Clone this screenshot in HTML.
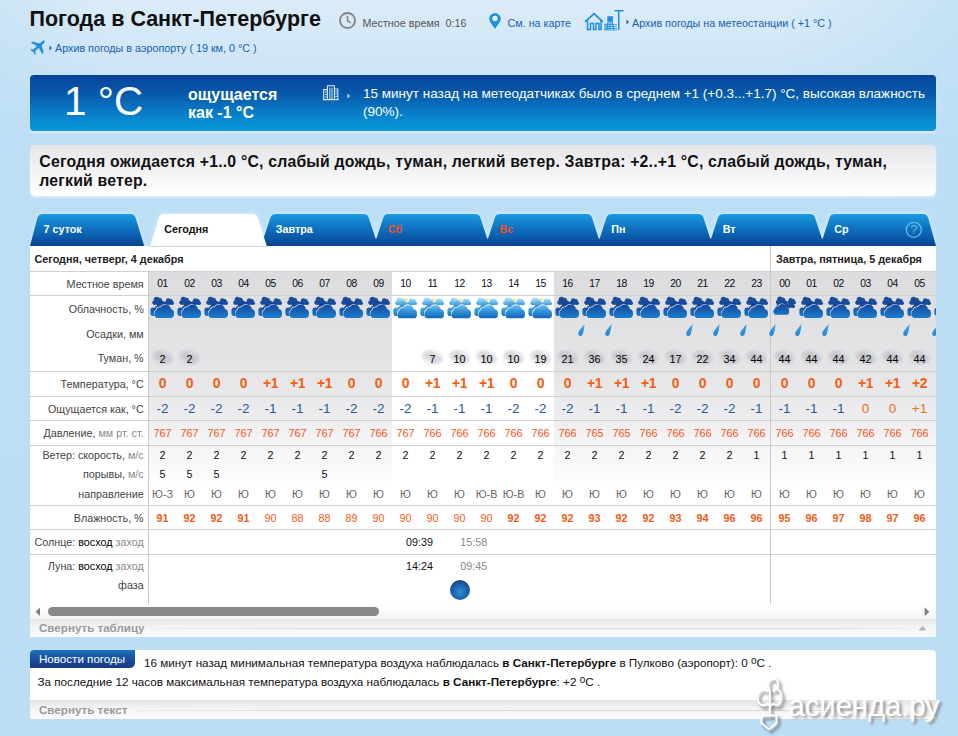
<!DOCTYPE html>
<html lang="ru"><head><meta charset="utf-8"><title>Погода в Санкт-Петербурге</title>
<style>
html,body{margin:0;padding:0}
body{width:958px;height:736px;overflow:hidden;position:relative;font-family:"Liberation Sans",Arial,sans-serif;background:#bcdef5}
#bg{position:absolute;left:0;top:0;width:958px;height:736px;background:linear-gradient(to bottom,#dcecf8 0,#cfe6f7 60px,#bddff5 135px,#bcdef5 100%)}
.t{position:absolute;white-space:nowrap;line-height:1}
.abs{position:absolute}
a{color:#1860b0;text-decoration:none}
.lnk{color:#1860b0;font-size:10.75px}
.lab{position:absolute;right:0;white-space:nowrap;font-size:10.75px;color:#444;line-height:1}
.c{position:absolute;width:27px;text-align:center;white-space:nowrap;line-height:1}
.hr{position:absolute;left:30px;width:906px;height:1px;background:#d0d0d0}
</style></head><body><div id="bg"></div><div class="abs" style="left:0;top:0;width:958px;height:736px;background:linear-gradient(to right,rgba(188,222,245,.5) 0,rgba(188,222,245,0) 110px,rgba(188,222,245,0) 780px,rgba(188,222,245,.7) 958px)"></div>

<div class="t" style="left:29.5px;top:9.2px;font-size:21.5px;font-weight:bold;color:#111">Погода в Санкт-Петербурге</div>
<svg class="abs" style="left:338px;top:11px" width="19" height="19" viewBox="0 0 19 19"><circle cx="9.5" cy="9.5" r="7.5" fill="none" stroke="#858585" stroke-width="1.9"/><path d="M9.5 4.8V9.8L12.6 11.6" fill="none" stroke="#858585" stroke-width="1.6"/></svg>
<div class="t" style="left:362.5px;top:17.6px;font-size:10.75px;color:#555;white-space:pre">Местное время  0:16</div>
<svg class="abs" style="left:488px;top:12px" width="14" height="18" viewBox="0 0 14 18"><path d="M7 1.2C3.7 1.2 1.3 3.6 1.3 6.7c0 3.6 3.6 6.3 5.7 10.2 2.1-3.9 5.7-6.6 5.7-10.2C12.7 3.6 10.3 1.2 7 1.2z" fill="#1b8fe0"/><circle cx="7" cy="6.5" r="2.7" fill="#e6f1fa"/></svg>
<div class="t lnk" style="left:507.5px;top:17.6px">См. на карте</div>
<svg class="abs" style="left:584px;top:8px" width="42" height="24" viewBox="0 0 42 24"><g fill="none" stroke="#1b8fe0" stroke-width="1.5"><path d="M1 13.8L10 5.6L19 13.8" stroke-width="1.8"/><path d="M3.5 12V21.6H6.5V15.5H9.5V21.6H12V15.5H15V21.6H17V12"/><path d="M34.7 2V22M30.5 2.7H39.5"/></g><rect x="23.3" y="8.3" width="5.6" height="5" fill="#1b8fe0"/><path d="M24.3 13L22.5 21.8M27.9 13L29.8 21.8M26.1 13V21.8" stroke="#1b8fe0" stroke-width="1.2" fill="none"/><path d="M20 16.5H33M20 18.5H33M20 20.5H33M20 22H33" stroke="#1b8fe0" stroke-width="0.9" opacity=".75"/><path d="M21 15.5V22M23 15.5V22M25 15.5V22" stroke="#1b8fe0" stroke-width="0.8" opacity=".7"/></svg>
<svg class="abs" style="left:626px;top:19px" width="4" height="6" viewBox="0 0 4 6"><path d="M0.5 0.5L3 3L0.5 5.5z" fill="#1860b0"/></svg>
<div class="t lnk" style="left:632px;top:17.6px">Архив погоды на метеостанции ( +1 °C )</div>
<svg class="abs" style="left:29.8px;top:40.2px" width="16" height="15.1" viewBox="0 0 18 17"><g fill="#1b8fe0"><path d="M16.3 0.9C17 1.6 16.4 3 15.3 4L4.4 13.8L2.4 11.8L13.2 1.9C14.2 0.9 15.6 0.3 16.3 0.9z"/><path d="M11.8 4.1L2.6 1.7L1.1 3.2L8.8 7.4z"/><path d="M13 5.4L15.3 14.4L13.8 15.9L9.7 8.4z"/><path d="M4.6 11.4L1.2 10.5L0.4 11.3L3.2 13.1zM5.5 12.4L6.5 15.8L5.7 16.6L3.8 13.7z"/></g></svg>
<svg class="abs" style="left:48.5px;top:45px" width="4" height="6" viewBox="0 0 4 6"><path d="M0.5 0.5L3 3L0.5 5.5z" fill="#1860b0"/></svg>
<div class="t lnk" style="left:55px;top:42.6px">Архив погоды в аэропорту ( 19 км, 0 °C )</div>
<div class="abs" style="left:30px;top:75px;width:906px;height:56px;border-radius:4px;box-shadow:0 2px 2px rgba(255,255,255,.45);background:linear-gradient(to bottom,#06449a 0,#0757a8 30%,#086fbc 55%,#0989d0 80%,#0b99dc 100%)"></div>
<div class="t" style="left:64px;top:80.5px;font-size:40.5px;color:#fff">1 °C</div>
<div class="t" style="left:188px;top:85.5px;font-size:16px;font-weight:bold;color:#fff;line-height:18.4px">ощущается<br>как -1 °C</div>
<svg class="abs" style="left:322px;top:84px" width="18" height="17" viewBox="0 0 18 17"><g fill="none" stroke="#e4eefa" stroke-width="1.05"><path d="M1.7 15.5V5.6H5.4M5.4 15.5V1.7H12.4V15.5M12.4 4.9H15.8V15.5M0.8 15.6H16.7"/><path d="M7.9 3.6V15M10 3.6V15" stroke-width=".9"/><path d="M2.8 8H5M2.8 10.5H5M2.8 13H5M13.2 7.5H15M13.2 10H15M13.2 12.5H15" stroke-width=".9" opacity=".85"/></g></svg>
<svg class="abs" style="left:347px;top:92.5px" width="4" height="6" viewBox="0 0 4 6"><path d="M0.5 0.5L3 3L0.5 5.5z" fill="#cfe3f5"/></svg>
<div class="t" style="left:363px;top:84.8px;font-size:13.5px;color:#fff;line-height:18.3px;white-space:normal;width:570px">15 минут назад на метеодатчиках было в среднем +1 (+0.3...+1.7) °C, высокая влажность (90%).</div>
<div class="abs" style="left:30px;top:145px;width:906px;height:51px;border-radius:5px;box-shadow:0 2px 2px rgba(255,255,255,.4);background:linear-gradient(to bottom,#e6e6e9 0,#f3f3f5 50%,#fff 100%)"></div>
<div class="t" style="left:39.3px;top:151.8px;font-size:15.8px;letter-spacing:0.2px;font-weight:bold;color:#111;line-height:19.3px;white-space:normal;width:880px">Сегодня ожидается +1..0 °C, слабый дождь, туман, легкий ветер. Завтра: +2..+1 °C, слабый дождь, туман, легкий ветер.</div>
<svg class="abs" style="left:30px;top:208px" width="906" height="38" viewBox="0 -6 906 38">
<defs><linearGradient id="tg" x1="0" y1="0" x2="0" y2="32" gradientUnits="userSpaceOnUse"><stop offset="0" stop-color="#1b9ce0"/><stop offset=".12" stop-color="#1590d8"/><stop offset=".5" stop-color="#0e6dbd"/><stop offset=".85" stop-color="#09509f"/><stop offset="1" stop-color="#074291"/></linearGradient>
<filter id="gl" x="-5%" y="-30%" width="110%" height="160%"><feGaussianBlur stdDeviation="2.2"/></filter></defs>
<g filter="url(#gl)" opacity=".55" fill="#fff"><path d="M0,32 L7.3,4 Q8.5,0 13,0 L100,0 Q104.5,0 105.7,4 L114.2,32 Z"/><path d="M231,32 L240.2,4 Q241.5,0 246,0 L333,0 Q337.5,0 338.6,3.2 L345.3,23.8 Q346,25.9 346.7,23.8 L353.4,3.2 Q354.5,0 359,0 L444.6,0 Q449.1,0 450.2,3.2 L456.9,23.8 Q457.6,25.9 458.3,23.8 L465,3.2 Q466.1,0 470.6,0 L556.2,0 Q560.7,0 561.8,3.2 L568.5,23.8 Q569.2,25.9 569.9,23.8 L576.6,3.2 Q577.7,0 582.2,0 L667.7,0 Q672.2,0 673.3,3.2 L680,23.8 Q680.7,25.9 681.4,23.8 L688.1,3.2 Q689.2,0 693.7,0 L779.3,0 Q783.8,0 784.9,3.2 L791.6,23.8 Q792.3,25.9 793,23.8 L799.7,3.2 Q800.8,0 805.3,0 L892.5,0 Q897,0 898.2,4 L906,32 Z"/><path d="M120.6,32 L128.8,4 Q130,0 134.5,0 L222,0 Q226.5,0 227.7,4 L236.8,32 Z"/></g>
<path d="M0,32 L7.3,4 Q8.5,0 13,0 L100,0 Q104.5,0 105.7,4 L114.2,32 Z" fill="url(#tg)"/><path d="M231,32 L240.2,4 Q241.5,0 246,0 L333,0 Q337.5,0 338.6,3.2 L345.3,23.8 Q346,25.9 346.7,23.8 L353.4,3.2 Q354.5,0 359,0 L444.6,0 Q449.1,0 450.2,3.2 L456.9,23.8 Q457.6,25.9 458.3,23.8 L465,3.2 Q466.1,0 470.6,0 L556.2,0 Q560.7,0 561.8,3.2 L568.5,23.8 Q569.2,25.9 569.9,23.8 L576.6,3.2 Q577.7,0 582.2,0 L667.7,0 Q672.2,0 673.3,3.2 L680,23.8 Q680.7,25.9 681.4,23.8 L688.1,3.2 Q689.2,0 693.7,0 L779.3,0 Q783.8,0 784.9,3.2 L791.6,23.8 Q792.3,25.9 793,23.8 L799.7,3.2 Q800.8,0 805.3,0 L892.5,0 Q897,0 898.2,4 L906,32 Z" fill="url(#tg)"/><path d="M120.6,32 L128.8,4 Q130,0 134.5,0 L222,0 Q226.5,0 227.7,4 L236.8,32 Z" fill="#fff"/>
<circle cx="883.8" cy="15.8" r="7.5" fill="none" stroke="#6ab8ea" stroke-width="1.3"/>
</svg><div class="t" style="left:910.2px;top:223.3px;font-size:13px;color:#6ab8ea">?</div><div class="t" style="left:43.6px;top:223.6px;font-size:10.75px;font-weight:bold;color:#fff">7 суток</div><div class="t" style="left:164.2px;top:223.6px;font-size:10.75px;font-weight:bold;color:#111">Сегодня</div><div class="t" style="left:275.8px;top:223.6px;font-size:10.75px;font-weight:bold;color:#fff">Завтра</div><div class="t" style="left:388px;top:223.6px;font-size:10.75px;font-weight:bold;color:#f4511e">Сб</div><div class="t" style="left:499.6px;top:223.6px;font-size:10.75px;font-weight:bold;color:#f4511e">Вс</div><div class="t" style="left:611.2px;top:223.6px;font-size:10.75px;font-weight:bold;color:#fff">Пн</div><div class="t" style="left:722.7px;top:223.6px;font-size:10.75px;font-weight:bold;color:#fff">Вт</div><div class="t" style="left:834.3px;top:223.6px;font-size:10.75px;font-weight:bold;color:#fff">Ср</div>
<div class="abs" style="left:30px;top:246px;width:906px;height:358px;background:#fff;overflow:hidden" id="tbl">
<div class="abs" style="left:119px;top:25px;width:243px;height:260px;background:linear-gradient(to bottom,#dcdcde 0,#dfdfe2 24px,#e5e5e8 100px,#e9e9eb 125px,#eeeef0 150px,#f5f5f6 175px,#fafafa 198px,#fff 220px)"></div>
<div class="abs" style="left:524px;top:25px;width:382px;height:260px;background:linear-gradient(to bottom,#dcdcde 0,#dfdfe2 24px,#e5e5e8 100px,#e9e9eb 125px,#eeeef0 150px,#f5f5f6 175px,#fafafa 198px,#fff 220px)"></div>
</div>
<div class="hr" style="top:271px"></div>
<div class="hr" style="top:295px"></div>
<div class="hr" style="top:371px"></div>
<div class="hr" style="top:396px"></div>
<div class="hr" style="top:420px"></div>
<div class="hr" style="top:445px"></div>
<div class="hr" style="top:505px"></div>
<div class="hr" style="top:529px"></div>
<div class="hr" style="top:554px"></div>
<div class="abs" style="left:148px;top:271px;width:1px;height:333px;background:#c8c8c8"></div>
<div class="abs" style="left:770px;top:246px;width:1px;height:358px;background:#c8c8c8"></div>
<div class="t" style="left:34.5px;top:253.6px;font-size:10.8px;font-weight:bold;color:#222">Сегодня, четверг, 4 декабря</div>
<div class="t" style="left:776px;top:253.6px;font-size:10.8px;font-weight:bold;color:#222">Завтра, пятница, 5 декабря</div>
<div class="abs" style="left:30px;top:0;width:113.7px;height:0">
<div class="lab" style="top:279.3px">Местное время</div>
<div class="lab" style="top:304.1px">Облачность, %</div>
<div class="lab" style="top:329.1px">Осадки, мм</div>
<div class="lab" style="top:353.4px">Туман, %</div>
<div class="lab" style="top:378.6px">Температура, °C</div>
<div class="lab" style="top:404.1px">Ощущается как, °C</div>
<div class="lab" style="top:428.1px">Давление, <span style="color:#888">мм рт. ст.</span></div>
<div class="lab" style="top:450.1px">Ветер: скорость, <span style="color:#888">м/с</span></div>
<div class="lab" style="top:468.8px">порывы, <span style="color:#888">м/с</span></div>
<div class="lab" style="top:488.8px">направление</div>
<div class="lab" style="top:512.9px">Влажность, %</div>
<div class="lab" style="top:536.9px">Солнце: <span style="color:#000">восход</span> <span style="color:#888">заход</span></div>
<div class="lab" style="top:560.9px">Луна: <span style="color:#000">восход</span> <span style="color:#888">заход</span></div>
<div class="lab" style="top:579.7px">фаза</div>
</div>
<div class="abs" style="left:150px;top:245.5px;width:117px;height:1px;background:#d4d4d4"></div>
<svg width="0" height="0" style="position:absolute"><defs>
<linearGradient id="cn" x1="0" y1="0" x2="0" y2="23" gradientUnits="userSpaceOnUse"><stop offset="0" stop-color="#123f8f"/><stop offset=".45" stop-color="#164fa2"/><stop offset="1" stop-color="#1c82d2"/></linearGradient>
<linearGradient id="cn2" x1="0" y1="0" x2="0" y2="23" gradientUnits="userSpaceOnUse"><stop offset="0" stop-color="#1a50a0"/><stop offset="1" stop-color="#123f8c"/></linearGradient>
<linearGradient id="cd" x1="0" y1="1" x2="0" y2="10" gradientUnits="userSpaceOnUse"><stop offset="0" stop-color="#c2e7f9"/><stop offset=".45" stop-color="#7fc8f1"/><stop offset="1" stop-color="#2a90d8"/></linearGradient>
<linearGradient id="cd2" x1="0" y1="9" x2="0" y2="22" gradientUnits="userSpaceOnUse"><stop offset="0" stop-color="#74c2ef"/><stop offset=".4" stop-color="#3a9adc"/><stop offset="1" stop-color="#1268ba"/></linearGradient>
<linearGradient id="cn3" x1="0" y1="0" x2="0" y2="23" gradientUnits="userSpaceOnUse"><stop offset="0" stop-color="#184c9c"/><stop offset="1" stop-color="#123e8a"/></linearGradient>
<linearGradient id="cd3" x1="0" y1="5" x2="0" y2="13" gradientUnits="userSpaceOnUse"><stop offset="0" stop-color="#70bcec"/><stop offset="1" stop-color="#1f7ccc"/></linearGradient>
<radialGradient id="fg"><stop offset="0" stop-color="#a0a0aa" stop-opacity=".3"/><stop offset=".6" stop-color="#a8a8b2" stop-opacity=".2"/><stop offset="1" stop-color="#b0b0b8" stop-opacity="0"/></radialGradient>
<linearGradient id="dr" x1="0" y1="0" x2="0" y2="1"><stop offset="0" stop-color="#4aa6e0"/><stop offset="1" stop-color="#1f86d0"/></linearGradient>
</defs></svg><svg class="abs" style="left:150.2px;top:296px" width="26" height="23" viewBox="0 0 26 23"><rect x="2.40" y="4.90" width="10.85" height="3.78" rx="1.89" fill="url(#cn2)"/><circle cx="4.56" cy="6.42" r="2.16" fill="url(#cn2)"/><circle cx="6.50" cy="3.61" r="2.81" fill="url(#cn2)"/><circle cx="9.53" cy="4.15" r="2.48" fill="url(#cn2)"/><circle cx="11.26" cy="6.52" r="2.00" fill="url(#cn2)"/><rect x="14.80" y="5.62" width="9.05" height="3.15" rx="1.57" fill="url(#cn2)"/><circle cx="16.60" cy="6.88" r="1.80" fill="url(#cn2)"/><circle cx="18.22" cy="4.54" r="2.34" fill="url(#cn2)"/><circle cx="20.74" cy="4.99" r="2.07" fill="url(#cn2)"/><circle cx="22.18" cy="6.97" r="1.67" fill="url(#cn2)"/><rect x="5.00" y="10.53" width="15.68" height="5.46" rx="2.73" fill="url(#cn3)"/><circle cx="8.12" cy="12.71" r="3.12" fill="url(#cn3)"/><circle cx="10.93" cy="8.66" r="4.06" fill="url(#cn3)"/><circle cx="15.30" cy="9.44" r="3.59" fill="url(#cn3)"/><circle cx="17.79" cy="12.87" r="2.89" fill="url(#cn3)"/><circle cx="3.3" cy="14.4" r="2.9" fill="url(#cn)"/><circle cx="3.2" cy="17.2" r="2.8" fill="url(#cn)"/><circle cx="5.5" cy="17.5" r="2.5" fill="url(#cn)"/><rect x="3.95" y="14.48" width="19.40" height="6.80" rx="3.40" fill="#d2e2f4"/><circle cx="7.85" cy="17.08" r="3.90" fill="#d2e2f4"/><circle cx="9.55" cy="14.28" r="3.70" fill="#d2e2f4"/><circle cx="14.85" cy="13.18" r="5.30" fill="#d2e2f4"/><circle cx="19.55" cy="16.08" r="3.80" fill="#d2e2f4"/><rect x="4.50" y="15.10" width="19.40" height="6.80" rx="3.40" fill="url(#cn)"/><circle cx="8.40" cy="17.70" r="3.90" fill="url(#cn)"/><circle cx="10.10" cy="14.90" r="3.70" fill="url(#cn)"/><circle cx="15.40" cy="13.80" r="5.30" fill="url(#cn)"/><circle cx="20.10" cy="16.70" r="3.80" fill="url(#cn)"/></svg><svg class="abs" style="left:177.2px;top:296px" width="26" height="23" viewBox="0 0 26 23"><rect x="2.40" y="4.90" width="10.85" height="3.78" rx="1.89" fill="url(#cn2)"/><circle cx="4.56" cy="6.42" r="2.16" fill="url(#cn2)"/><circle cx="6.50" cy="3.61" r="2.81" fill="url(#cn2)"/><circle cx="9.53" cy="4.15" r="2.48" fill="url(#cn2)"/><circle cx="11.26" cy="6.52" r="2.00" fill="url(#cn2)"/><rect x="14.80" y="5.62" width="9.05" height="3.15" rx="1.57" fill="url(#cn2)"/><circle cx="16.60" cy="6.88" r="1.80" fill="url(#cn2)"/><circle cx="18.22" cy="4.54" r="2.34" fill="url(#cn2)"/><circle cx="20.74" cy="4.99" r="2.07" fill="url(#cn2)"/><circle cx="22.18" cy="6.97" r="1.67" fill="url(#cn2)"/><rect x="5.00" y="10.53" width="15.68" height="5.46" rx="2.73" fill="url(#cn3)"/><circle cx="8.12" cy="12.71" r="3.12" fill="url(#cn3)"/><circle cx="10.93" cy="8.66" r="4.06" fill="url(#cn3)"/><circle cx="15.30" cy="9.44" r="3.59" fill="url(#cn3)"/><circle cx="17.79" cy="12.87" r="2.89" fill="url(#cn3)"/><circle cx="3.3" cy="14.4" r="2.9" fill="url(#cn)"/><circle cx="3.2" cy="17.2" r="2.8" fill="url(#cn)"/><circle cx="5.5" cy="17.5" r="2.5" fill="url(#cn)"/><rect x="3.95" y="14.48" width="19.40" height="6.80" rx="3.40" fill="#d2e2f4"/><circle cx="7.85" cy="17.08" r="3.90" fill="#d2e2f4"/><circle cx="9.55" cy="14.28" r="3.70" fill="#d2e2f4"/><circle cx="14.85" cy="13.18" r="5.30" fill="#d2e2f4"/><circle cx="19.55" cy="16.08" r="3.80" fill="#d2e2f4"/><rect x="4.50" y="15.10" width="19.40" height="6.80" rx="3.40" fill="url(#cn)"/><circle cx="8.40" cy="17.70" r="3.90" fill="url(#cn)"/><circle cx="10.10" cy="14.90" r="3.70" fill="url(#cn)"/><circle cx="15.40" cy="13.80" r="5.30" fill="url(#cn)"/><circle cx="20.10" cy="16.70" r="3.80" fill="url(#cn)"/></svg><svg class="abs" style="left:204.2px;top:296px" width="26" height="23" viewBox="0 0 26 23"><rect x="2.40" y="4.90" width="10.85" height="3.78" rx="1.89" fill="url(#cn2)"/><circle cx="4.56" cy="6.42" r="2.16" fill="url(#cn2)"/><circle cx="6.50" cy="3.61" r="2.81" fill="url(#cn2)"/><circle cx="9.53" cy="4.15" r="2.48" fill="url(#cn2)"/><circle cx="11.26" cy="6.52" r="2.00" fill="url(#cn2)"/><rect x="14.80" y="5.62" width="9.05" height="3.15" rx="1.57" fill="url(#cn2)"/><circle cx="16.60" cy="6.88" r="1.80" fill="url(#cn2)"/><circle cx="18.22" cy="4.54" r="2.34" fill="url(#cn2)"/><circle cx="20.74" cy="4.99" r="2.07" fill="url(#cn2)"/><circle cx="22.18" cy="6.97" r="1.67" fill="url(#cn2)"/><rect x="5.00" y="10.53" width="15.68" height="5.46" rx="2.73" fill="url(#cn3)"/><circle cx="8.12" cy="12.71" r="3.12" fill="url(#cn3)"/><circle cx="10.93" cy="8.66" r="4.06" fill="url(#cn3)"/><circle cx="15.30" cy="9.44" r="3.59" fill="url(#cn3)"/><circle cx="17.79" cy="12.87" r="2.89" fill="url(#cn3)"/><circle cx="3.3" cy="14.4" r="2.9" fill="url(#cn)"/><circle cx="3.2" cy="17.2" r="2.8" fill="url(#cn)"/><circle cx="5.5" cy="17.5" r="2.5" fill="url(#cn)"/><rect x="3.95" y="14.48" width="19.40" height="6.80" rx="3.40" fill="#d2e2f4"/><circle cx="7.85" cy="17.08" r="3.90" fill="#d2e2f4"/><circle cx="9.55" cy="14.28" r="3.70" fill="#d2e2f4"/><circle cx="14.85" cy="13.18" r="5.30" fill="#d2e2f4"/><circle cx="19.55" cy="16.08" r="3.80" fill="#d2e2f4"/><rect x="4.50" y="15.10" width="19.40" height="6.80" rx="3.40" fill="url(#cn)"/><circle cx="8.40" cy="17.70" r="3.90" fill="url(#cn)"/><circle cx="10.10" cy="14.90" r="3.70" fill="url(#cn)"/><circle cx="15.40" cy="13.80" r="5.30" fill="url(#cn)"/><circle cx="20.10" cy="16.70" r="3.80" fill="url(#cn)"/></svg><svg class="abs" style="left:231.2px;top:296px" width="26" height="23" viewBox="0 0 26 23"><rect x="2.40" y="4.90" width="10.85" height="3.78" rx="1.89" fill="url(#cn2)"/><circle cx="4.56" cy="6.42" r="2.16" fill="url(#cn2)"/><circle cx="6.50" cy="3.61" r="2.81" fill="url(#cn2)"/><circle cx="9.53" cy="4.15" r="2.48" fill="url(#cn2)"/><circle cx="11.26" cy="6.52" r="2.00" fill="url(#cn2)"/><rect x="14.80" y="5.62" width="9.05" height="3.15" rx="1.57" fill="url(#cn2)"/><circle cx="16.60" cy="6.88" r="1.80" fill="url(#cn2)"/><circle cx="18.22" cy="4.54" r="2.34" fill="url(#cn2)"/><circle cx="20.74" cy="4.99" r="2.07" fill="url(#cn2)"/><circle cx="22.18" cy="6.97" r="1.67" fill="url(#cn2)"/><rect x="5.00" y="10.53" width="15.68" height="5.46" rx="2.73" fill="url(#cn3)"/><circle cx="8.12" cy="12.71" r="3.12" fill="url(#cn3)"/><circle cx="10.93" cy="8.66" r="4.06" fill="url(#cn3)"/><circle cx="15.30" cy="9.44" r="3.59" fill="url(#cn3)"/><circle cx="17.79" cy="12.87" r="2.89" fill="url(#cn3)"/><circle cx="3.3" cy="14.4" r="2.9" fill="url(#cn)"/><circle cx="3.2" cy="17.2" r="2.8" fill="url(#cn)"/><circle cx="5.5" cy="17.5" r="2.5" fill="url(#cn)"/><rect x="3.95" y="14.48" width="19.40" height="6.80" rx="3.40" fill="#d2e2f4"/><circle cx="7.85" cy="17.08" r="3.90" fill="#d2e2f4"/><circle cx="9.55" cy="14.28" r="3.70" fill="#d2e2f4"/><circle cx="14.85" cy="13.18" r="5.30" fill="#d2e2f4"/><circle cx="19.55" cy="16.08" r="3.80" fill="#d2e2f4"/><rect x="4.50" y="15.10" width="19.40" height="6.80" rx="3.40" fill="url(#cn)"/><circle cx="8.40" cy="17.70" r="3.90" fill="url(#cn)"/><circle cx="10.10" cy="14.90" r="3.70" fill="url(#cn)"/><circle cx="15.40" cy="13.80" r="5.30" fill="url(#cn)"/><circle cx="20.10" cy="16.70" r="3.80" fill="url(#cn)"/></svg><svg class="abs" style="left:258.2px;top:296px" width="26" height="23" viewBox="0 0 26 23"><rect x="2.40" y="4.90" width="10.85" height="3.78" rx="1.89" fill="url(#cn2)"/><circle cx="4.56" cy="6.42" r="2.16" fill="url(#cn2)"/><circle cx="6.50" cy="3.61" r="2.81" fill="url(#cn2)"/><circle cx="9.53" cy="4.15" r="2.48" fill="url(#cn2)"/><circle cx="11.26" cy="6.52" r="2.00" fill="url(#cn2)"/><rect x="14.80" y="5.62" width="9.05" height="3.15" rx="1.57" fill="url(#cn2)"/><circle cx="16.60" cy="6.88" r="1.80" fill="url(#cn2)"/><circle cx="18.22" cy="4.54" r="2.34" fill="url(#cn2)"/><circle cx="20.74" cy="4.99" r="2.07" fill="url(#cn2)"/><circle cx="22.18" cy="6.97" r="1.67" fill="url(#cn2)"/><rect x="5.00" y="10.53" width="15.68" height="5.46" rx="2.73" fill="url(#cn3)"/><circle cx="8.12" cy="12.71" r="3.12" fill="url(#cn3)"/><circle cx="10.93" cy="8.66" r="4.06" fill="url(#cn3)"/><circle cx="15.30" cy="9.44" r="3.59" fill="url(#cn3)"/><circle cx="17.79" cy="12.87" r="2.89" fill="url(#cn3)"/><circle cx="3.3" cy="14.4" r="2.9" fill="url(#cn)"/><circle cx="3.2" cy="17.2" r="2.8" fill="url(#cn)"/><circle cx="5.5" cy="17.5" r="2.5" fill="url(#cn)"/><rect x="3.95" y="14.48" width="19.40" height="6.80" rx="3.40" fill="#d2e2f4"/><circle cx="7.85" cy="17.08" r="3.90" fill="#d2e2f4"/><circle cx="9.55" cy="14.28" r="3.70" fill="#d2e2f4"/><circle cx="14.85" cy="13.18" r="5.30" fill="#d2e2f4"/><circle cx="19.55" cy="16.08" r="3.80" fill="#d2e2f4"/><rect x="4.50" y="15.10" width="19.40" height="6.80" rx="3.40" fill="url(#cn)"/><circle cx="8.40" cy="17.70" r="3.90" fill="url(#cn)"/><circle cx="10.10" cy="14.90" r="3.70" fill="url(#cn)"/><circle cx="15.40" cy="13.80" r="5.30" fill="url(#cn)"/><circle cx="20.10" cy="16.70" r="3.80" fill="url(#cn)"/></svg><svg class="abs" style="left:285.2px;top:296px" width="26" height="23" viewBox="0 0 26 23"><rect x="2.40" y="4.90" width="10.85" height="3.78" rx="1.89" fill="url(#cn2)"/><circle cx="4.56" cy="6.42" r="2.16" fill="url(#cn2)"/><circle cx="6.50" cy="3.61" r="2.81" fill="url(#cn2)"/><circle cx="9.53" cy="4.15" r="2.48" fill="url(#cn2)"/><circle cx="11.26" cy="6.52" r="2.00" fill="url(#cn2)"/><rect x="14.80" y="5.62" width="9.05" height="3.15" rx="1.57" fill="url(#cn2)"/><circle cx="16.60" cy="6.88" r="1.80" fill="url(#cn2)"/><circle cx="18.22" cy="4.54" r="2.34" fill="url(#cn2)"/><circle cx="20.74" cy="4.99" r="2.07" fill="url(#cn2)"/><circle cx="22.18" cy="6.97" r="1.67" fill="url(#cn2)"/><rect x="5.00" y="10.53" width="15.68" height="5.46" rx="2.73" fill="url(#cn3)"/><circle cx="8.12" cy="12.71" r="3.12" fill="url(#cn3)"/><circle cx="10.93" cy="8.66" r="4.06" fill="url(#cn3)"/><circle cx="15.30" cy="9.44" r="3.59" fill="url(#cn3)"/><circle cx="17.79" cy="12.87" r="2.89" fill="url(#cn3)"/><circle cx="3.3" cy="14.4" r="2.9" fill="url(#cn)"/><circle cx="3.2" cy="17.2" r="2.8" fill="url(#cn)"/><circle cx="5.5" cy="17.5" r="2.5" fill="url(#cn)"/><rect x="3.95" y="14.48" width="19.40" height="6.80" rx="3.40" fill="#d2e2f4"/><circle cx="7.85" cy="17.08" r="3.90" fill="#d2e2f4"/><circle cx="9.55" cy="14.28" r="3.70" fill="#d2e2f4"/><circle cx="14.85" cy="13.18" r="5.30" fill="#d2e2f4"/><circle cx="19.55" cy="16.08" r="3.80" fill="#d2e2f4"/><rect x="4.50" y="15.10" width="19.40" height="6.80" rx="3.40" fill="url(#cn)"/><circle cx="8.40" cy="17.70" r="3.90" fill="url(#cn)"/><circle cx="10.10" cy="14.90" r="3.70" fill="url(#cn)"/><circle cx="15.40" cy="13.80" r="5.30" fill="url(#cn)"/><circle cx="20.10" cy="16.70" r="3.80" fill="url(#cn)"/></svg><svg class="abs" style="left:312.2px;top:296px" width="26" height="23" viewBox="0 0 26 23"><rect x="2.40" y="4.90" width="10.85" height="3.78" rx="1.89" fill="url(#cn2)"/><circle cx="4.56" cy="6.42" r="2.16" fill="url(#cn2)"/><circle cx="6.50" cy="3.61" r="2.81" fill="url(#cn2)"/><circle cx="9.53" cy="4.15" r="2.48" fill="url(#cn2)"/><circle cx="11.26" cy="6.52" r="2.00" fill="url(#cn2)"/><rect x="14.80" y="5.62" width="9.05" height="3.15" rx="1.57" fill="url(#cn2)"/><circle cx="16.60" cy="6.88" r="1.80" fill="url(#cn2)"/><circle cx="18.22" cy="4.54" r="2.34" fill="url(#cn2)"/><circle cx="20.74" cy="4.99" r="2.07" fill="url(#cn2)"/><circle cx="22.18" cy="6.97" r="1.67" fill="url(#cn2)"/><rect x="5.00" y="10.53" width="15.68" height="5.46" rx="2.73" fill="url(#cn3)"/><circle cx="8.12" cy="12.71" r="3.12" fill="url(#cn3)"/><circle cx="10.93" cy="8.66" r="4.06" fill="url(#cn3)"/><circle cx="15.30" cy="9.44" r="3.59" fill="url(#cn3)"/><circle cx="17.79" cy="12.87" r="2.89" fill="url(#cn3)"/><circle cx="3.3" cy="14.4" r="2.9" fill="url(#cn)"/><circle cx="3.2" cy="17.2" r="2.8" fill="url(#cn)"/><circle cx="5.5" cy="17.5" r="2.5" fill="url(#cn)"/><rect x="3.95" y="14.48" width="19.40" height="6.80" rx="3.40" fill="#d2e2f4"/><circle cx="7.85" cy="17.08" r="3.90" fill="#d2e2f4"/><circle cx="9.55" cy="14.28" r="3.70" fill="#d2e2f4"/><circle cx="14.85" cy="13.18" r="5.30" fill="#d2e2f4"/><circle cx="19.55" cy="16.08" r="3.80" fill="#d2e2f4"/><rect x="4.50" y="15.10" width="19.40" height="6.80" rx="3.40" fill="url(#cn)"/><circle cx="8.40" cy="17.70" r="3.90" fill="url(#cn)"/><circle cx="10.10" cy="14.90" r="3.70" fill="url(#cn)"/><circle cx="15.40" cy="13.80" r="5.30" fill="url(#cn)"/><circle cx="20.10" cy="16.70" r="3.80" fill="url(#cn)"/></svg><svg class="abs" style="left:339.2px;top:296px" width="26" height="23" viewBox="0 0 26 23"><rect x="2.40" y="4.90" width="10.85" height="3.78" rx="1.89" fill="url(#cn2)"/><circle cx="4.56" cy="6.42" r="2.16" fill="url(#cn2)"/><circle cx="6.50" cy="3.61" r="2.81" fill="url(#cn2)"/><circle cx="9.53" cy="4.15" r="2.48" fill="url(#cn2)"/><circle cx="11.26" cy="6.52" r="2.00" fill="url(#cn2)"/><rect x="14.80" y="5.62" width="9.05" height="3.15" rx="1.57" fill="url(#cn2)"/><circle cx="16.60" cy="6.88" r="1.80" fill="url(#cn2)"/><circle cx="18.22" cy="4.54" r="2.34" fill="url(#cn2)"/><circle cx="20.74" cy="4.99" r="2.07" fill="url(#cn2)"/><circle cx="22.18" cy="6.97" r="1.67" fill="url(#cn2)"/><rect x="5.00" y="10.53" width="15.68" height="5.46" rx="2.73" fill="url(#cn3)"/><circle cx="8.12" cy="12.71" r="3.12" fill="url(#cn3)"/><circle cx="10.93" cy="8.66" r="4.06" fill="url(#cn3)"/><circle cx="15.30" cy="9.44" r="3.59" fill="url(#cn3)"/><circle cx="17.79" cy="12.87" r="2.89" fill="url(#cn3)"/><circle cx="3.3" cy="14.4" r="2.9" fill="url(#cn)"/><circle cx="3.2" cy="17.2" r="2.8" fill="url(#cn)"/><circle cx="5.5" cy="17.5" r="2.5" fill="url(#cn)"/><rect x="3.95" y="14.48" width="19.40" height="6.80" rx="3.40" fill="#d2e2f4"/><circle cx="7.85" cy="17.08" r="3.90" fill="#d2e2f4"/><circle cx="9.55" cy="14.28" r="3.70" fill="#d2e2f4"/><circle cx="14.85" cy="13.18" r="5.30" fill="#d2e2f4"/><circle cx="19.55" cy="16.08" r="3.80" fill="#d2e2f4"/><rect x="4.50" y="15.10" width="19.40" height="6.80" rx="3.40" fill="url(#cn)"/><circle cx="8.40" cy="17.70" r="3.90" fill="url(#cn)"/><circle cx="10.10" cy="14.90" r="3.70" fill="url(#cn)"/><circle cx="15.40" cy="13.80" r="5.30" fill="url(#cn)"/><circle cx="20.10" cy="16.70" r="3.80" fill="url(#cn)"/></svg><svg class="abs" style="left:366.2px;top:296px" width="26" height="23" viewBox="0 0 26 23"><rect x="2.40" y="4.90" width="10.85" height="3.78" rx="1.89" fill="url(#cn2)"/><circle cx="4.56" cy="6.42" r="2.16" fill="url(#cn2)"/><circle cx="6.50" cy="3.61" r="2.81" fill="url(#cn2)"/><circle cx="9.53" cy="4.15" r="2.48" fill="url(#cn2)"/><circle cx="11.26" cy="6.52" r="2.00" fill="url(#cn2)"/><rect x="14.80" y="5.62" width="9.05" height="3.15" rx="1.57" fill="url(#cn2)"/><circle cx="16.60" cy="6.88" r="1.80" fill="url(#cn2)"/><circle cx="18.22" cy="4.54" r="2.34" fill="url(#cn2)"/><circle cx="20.74" cy="4.99" r="2.07" fill="url(#cn2)"/><circle cx="22.18" cy="6.97" r="1.67" fill="url(#cn2)"/><rect x="5.00" y="10.53" width="15.68" height="5.46" rx="2.73" fill="url(#cn3)"/><circle cx="8.12" cy="12.71" r="3.12" fill="url(#cn3)"/><circle cx="10.93" cy="8.66" r="4.06" fill="url(#cn3)"/><circle cx="15.30" cy="9.44" r="3.59" fill="url(#cn3)"/><circle cx="17.79" cy="12.87" r="2.89" fill="url(#cn3)"/><circle cx="3.3" cy="14.4" r="2.9" fill="url(#cn)"/><circle cx="3.2" cy="17.2" r="2.8" fill="url(#cn)"/><circle cx="5.5" cy="17.5" r="2.5" fill="url(#cn)"/><rect x="3.95" y="14.48" width="19.40" height="6.80" rx="3.40" fill="#d2e2f4"/><circle cx="7.85" cy="17.08" r="3.90" fill="#d2e2f4"/><circle cx="9.55" cy="14.28" r="3.70" fill="#d2e2f4"/><circle cx="14.85" cy="13.18" r="5.30" fill="#d2e2f4"/><circle cx="19.55" cy="16.08" r="3.80" fill="#d2e2f4"/><rect x="4.50" y="15.10" width="19.40" height="6.80" rx="3.40" fill="url(#cn)"/><circle cx="8.40" cy="17.70" r="3.90" fill="url(#cn)"/><circle cx="10.10" cy="14.90" r="3.70" fill="url(#cn)"/><circle cx="15.40" cy="13.80" r="5.30" fill="url(#cn)"/><circle cx="20.10" cy="16.70" r="3.80" fill="url(#cn)"/></svg><svg class="abs" style="left:393.2px;top:296px" width="26" height="23" viewBox="0 0 26 23"><circle cx="13.4" cy="4.2" r="1.7" fill="#f5e27a"/><rect x="2.40" y="5.35" width="10.45" height="3.64" rx="1.82" fill="url(#cd)"/><circle cx="4.48" cy="6.81" r="2.08" fill="url(#cd)"/><circle cx="6.35" cy="4.10" r="2.70" fill="url(#cd)"/><circle cx="9.26" cy="4.62" r="2.39" fill="url(#cd)"/><circle cx="10.93" cy="6.91" r="1.92" fill="url(#cd)"/><rect x="14.80" y="5.82" width="9.05" height="3.15" rx="1.57" fill="url(#cd)"/><circle cx="16.60" cy="7.08" r="1.80" fill="url(#cd)"/><circle cx="18.22" cy="4.74" r="2.34" fill="url(#cd)"/><circle cx="20.74" cy="5.19" r="2.07" fill="url(#cd)"/><circle cx="22.18" cy="7.17" r="1.67" fill="url(#cd)"/><rect x="5.00" y="10.98" width="15.28" height="5.32" rx="2.66" fill="url(#cd3)"/><circle cx="8.04" cy="13.10" r="3.04" fill="url(#cd3)"/><circle cx="10.78" cy="9.15" r="3.95" fill="url(#cd3)"/><circle cx="15.03" cy="9.91" r="3.50" fill="url(#cd3)"/><circle cx="17.46" cy="13.26" r="2.81" fill="url(#cd3)"/><circle cx="3.3" cy="14.4" r="2.9" fill="url(#cd2)"/><circle cx="3.2" cy="17.2" r="2.8" fill="url(#cd2)"/><circle cx="5.5" cy="17.5" r="2.5" fill="url(#cd2)"/><rect x="3.95" y="14.88" width="19.40" height="6.80" rx="3.40" fill="#f2f9fe"/><circle cx="7.85" cy="17.48" r="3.90" fill="#f2f9fe"/><circle cx="9.55" cy="14.68" r="3.70" fill="#f2f9fe"/><circle cx="14.85" cy="13.58" r="5.30" fill="#f2f9fe"/><circle cx="19.55" cy="16.48" r="3.80" fill="#f2f9fe"/><rect x="4.50" y="15.50" width="19.40" height="6.80" rx="3.40" fill="url(#cd2)"/><circle cx="8.40" cy="18.10" r="3.90" fill="url(#cd2)"/><circle cx="10.10" cy="15.30" r="3.70" fill="url(#cd2)"/><circle cx="15.40" cy="14.20" r="5.30" fill="url(#cd2)"/><circle cx="20.10" cy="17.10" r="3.80" fill="url(#cd2)"/></svg><svg class="abs" style="left:420.2px;top:296px" width="26" height="23" viewBox="0 0 26 23"><circle cx="13.4" cy="4.2" r="1.7" fill="#f5e27a"/><rect x="2.40" y="5.35" width="10.45" height="3.64" rx="1.82" fill="url(#cd)"/><circle cx="4.48" cy="6.81" r="2.08" fill="url(#cd)"/><circle cx="6.35" cy="4.10" r="2.70" fill="url(#cd)"/><circle cx="9.26" cy="4.62" r="2.39" fill="url(#cd)"/><circle cx="10.93" cy="6.91" r="1.92" fill="url(#cd)"/><rect x="14.80" y="5.82" width="9.05" height="3.15" rx="1.57" fill="url(#cd)"/><circle cx="16.60" cy="7.08" r="1.80" fill="url(#cd)"/><circle cx="18.22" cy="4.74" r="2.34" fill="url(#cd)"/><circle cx="20.74" cy="5.19" r="2.07" fill="url(#cd)"/><circle cx="22.18" cy="7.17" r="1.67" fill="url(#cd)"/><rect x="5.00" y="10.98" width="15.28" height="5.32" rx="2.66" fill="url(#cd3)"/><circle cx="8.04" cy="13.10" r="3.04" fill="url(#cd3)"/><circle cx="10.78" cy="9.15" r="3.95" fill="url(#cd3)"/><circle cx="15.03" cy="9.91" r="3.50" fill="url(#cd3)"/><circle cx="17.46" cy="13.26" r="2.81" fill="url(#cd3)"/><circle cx="3.3" cy="14.4" r="2.9" fill="url(#cd2)"/><circle cx="3.2" cy="17.2" r="2.8" fill="url(#cd2)"/><circle cx="5.5" cy="17.5" r="2.5" fill="url(#cd2)"/><rect x="3.95" y="14.88" width="19.40" height="6.80" rx="3.40" fill="#f2f9fe"/><circle cx="7.85" cy="17.48" r="3.90" fill="#f2f9fe"/><circle cx="9.55" cy="14.68" r="3.70" fill="#f2f9fe"/><circle cx="14.85" cy="13.58" r="5.30" fill="#f2f9fe"/><circle cx="19.55" cy="16.48" r="3.80" fill="#f2f9fe"/><rect x="4.50" y="15.50" width="19.40" height="6.80" rx="3.40" fill="url(#cd2)"/><circle cx="8.40" cy="18.10" r="3.90" fill="url(#cd2)"/><circle cx="10.10" cy="15.30" r="3.70" fill="url(#cd2)"/><circle cx="15.40" cy="14.20" r="5.30" fill="url(#cd2)"/><circle cx="20.10" cy="17.10" r="3.80" fill="url(#cd2)"/></svg><svg class="abs" style="left:447.2px;top:296px" width="26" height="23" viewBox="0 0 26 23"><circle cx="13.4" cy="4.2" r="1.7" fill="#f5e27a"/><rect x="2.40" y="5.35" width="10.45" height="3.64" rx="1.82" fill="url(#cd)"/><circle cx="4.48" cy="6.81" r="2.08" fill="url(#cd)"/><circle cx="6.35" cy="4.10" r="2.70" fill="url(#cd)"/><circle cx="9.26" cy="4.62" r="2.39" fill="url(#cd)"/><circle cx="10.93" cy="6.91" r="1.92" fill="url(#cd)"/><rect x="14.80" y="5.82" width="9.05" height="3.15" rx="1.57" fill="url(#cd)"/><circle cx="16.60" cy="7.08" r="1.80" fill="url(#cd)"/><circle cx="18.22" cy="4.74" r="2.34" fill="url(#cd)"/><circle cx="20.74" cy="5.19" r="2.07" fill="url(#cd)"/><circle cx="22.18" cy="7.17" r="1.67" fill="url(#cd)"/><rect x="5.00" y="10.98" width="15.28" height="5.32" rx="2.66" fill="url(#cd3)"/><circle cx="8.04" cy="13.10" r="3.04" fill="url(#cd3)"/><circle cx="10.78" cy="9.15" r="3.95" fill="url(#cd3)"/><circle cx="15.03" cy="9.91" r="3.50" fill="url(#cd3)"/><circle cx="17.46" cy="13.26" r="2.81" fill="url(#cd3)"/><circle cx="3.3" cy="14.4" r="2.9" fill="url(#cd2)"/><circle cx="3.2" cy="17.2" r="2.8" fill="url(#cd2)"/><circle cx="5.5" cy="17.5" r="2.5" fill="url(#cd2)"/><rect x="3.95" y="14.88" width="19.40" height="6.80" rx="3.40" fill="#f2f9fe"/><circle cx="7.85" cy="17.48" r="3.90" fill="#f2f9fe"/><circle cx="9.55" cy="14.68" r="3.70" fill="#f2f9fe"/><circle cx="14.85" cy="13.58" r="5.30" fill="#f2f9fe"/><circle cx="19.55" cy="16.48" r="3.80" fill="#f2f9fe"/><rect x="4.50" y="15.50" width="19.40" height="6.80" rx="3.40" fill="url(#cd2)"/><circle cx="8.40" cy="18.10" r="3.90" fill="url(#cd2)"/><circle cx="10.10" cy="15.30" r="3.70" fill="url(#cd2)"/><circle cx="15.40" cy="14.20" r="5.30" fill="url(#cd2)"/><circle cx="20.10" cy="17.10" r="3.80" fill="url(#cd2)"/></svg><svg class="abs" style="left:474.2px;top:296px" width="26" height="23" viewBox="0 0 26 23"><circle cx="13.4" cy="4.2" r="1.7" fill="#f5e27a"/><rect x="2.40" y="5.35" width="10.45" height="3.64" rx="1.82" fill="url(#cd)"/><circle cx="4.48" cy="6.81" r="2.08" fill="url(#cd)"/><circle cx="6.35" cy="4.10" r="2.70" fill="url(#cd)"/><circle cx="9.26" cy="4.62" r="2.39" fill="url(#cd)"/><circle cx="10.93" cy="6.91" r="1.92" fill="url(#cd)"/><rect x="14.80" y="5.82" width="9.05" height="3.15" rx="1.57" fill="url(#cd)"/><circle cx="16.60" cy="7.08" r="1.80" fill="url(#cd)"/><circle cx="18.22" cy="4.74" r="2.34" fill="url(#cd)"/><circle cx="20.74" cy="5.19" r="2.07" fill="url(#cd)"/><circle cx="22.18" cy="7.17" r="1.67" fill="url(#cd)"/><rect x="5.00" y="10.98" width="15.28" height="5.32" rx="2.66" fill="url(#cd3)"/><circle cx="8.04" cy="13.10" r="3.04" fill="url(#cd3)"/><circle cx="10.78" cy="9.15" r="3.95" fill="url(#cd3)"/><circle cx="15.03" cy="9.91" r="3.50" fill="url(#cd3)"/><circle cx="17.46" cy="13.26" r="2.81" fill="url(#cd3)"/><circle cx="3.3" cy="14.4" r="2.9" fill="url(#cd2)"/><circle cx="3.2" cy="17.2" r="2.8" fill="url(#cd2)"/><circle cx="5.5" cy="17.5" r="2.5" fill="url(#cd2)"/><rect x="3.95" y="14.88" width="19.40" height="6.80" rx="3.40" fill="#f2f9fe"/><circle cx="7.85" cy="17.48" r="3.90" fill="#f2f9fe"/><circle cx="9.55" cy="14.68" r="3.70" fill="#f2f9fe"/><circle cx="14.85" cy="13.58" r="5.30" fill="#f2f9fe"/><circle cx="19.55" cy="16.48" r="3.80" fill="#f2f9fe"/><rect x="4.50" y="15.50" width="19.40" height="6.80" rx="3.40" fill="url(#cd2)"/><circle cx="8.40" cy="18.10" r="3.90" fill="url(#cd2)"/><circle cx="10.10" cy="15.30" r="3.70" fill="url(#cd2)"/><circle cx="15.40" cy="14.20" r="5.30" fill="url(#cd2)"/><circle cx="20.10" cy="17.10" r="3.80" fill="url(#cd2)"/></svg><svg class="abs" style="left:501.2px;top:296px" width="26" height="23" viewBox="0 0 26 23"><circle cx="13.4" cy="4.2" r="1.7" fill="#f5e27a"/><rect x="2.40" y="5.35" width="10.45" height="3.64" rx="1.82" fill="url(#cd)"/><circle cx="4.48" cy="6.81" r="2.08" fill="url(#cd)"/><circle cx="6.35" cy="4.10" r="2.70" fill="url(#cd)"/><circle cx="9.26" cy="4.62" r="2.39" fill="url(#cd)"/><circle cx="10.93" cy="6.91" r="1.92" fill="url(#cd)"/><rect x="14.80" y="5.82" width="9.05" height="3.15" rx="1.57" fill="url(#cd)"/><circle cx="16.60" cy="7.08" r="1.80" fill="url(#cd)"/><circle cx="18.22" cy="4.74" r="2.34" fill="url(#cd)"/><circle cx="20.74" cy="5.19" r="2.07" fill="url(#cd)"/><circle cx="22.18" cy="7.17" r="1.67" fill="url(#cd)"/><rect x="5.00" y="10.98" width="15.28" height="5.32" rx="2.66" fill="url(#cd3)"/><circle cx="8.04" cy="13.10" r="3.04" fill="url(#cd3)"/><circle cx="10.78" cy="9.15" r="3.95" fill="url(#cd3)"/><circle cx="15.03" cy="9.91" r="3.50" fill="url(#cd3)"/><circle cx="17.46" cy="13.26" r="2.81" fill="url(#cd3)"/><circle cx="3.3" cy="14.4" r="2.9" fill="url(#cd2)"/><circle cx="3.2" cy="17.2" r="2.8" fill="url(#cd2)"/><circle cx="5.5" cy="17.5" r="2.5" fill="url(#cd2)"/><rect x="3.95" y="14.88" width="19.40" height="6.80" rx="3.40" fill="#f2f9fe"/><circle cx="7.85" cy="17.48" r="3.90" fill="#f2f9fe"/><circle cx="9.55" cy="14.68" r="3.70" fill="#f2f9fe"/><circle cx="14.85" cy="13.58" r="5.30" fill="#f2f9fe"/><circle cx="19.55" cy="16.48" r="3.80" fill="#f2f9fe"/><rect x="4.50" y="15.50" width="19.40" height="6.80" rx="3.40" fill="url(#cd2)"/><circle cx="8.40" cy="18.10" r="3.90" fill="url(#cd2)"/><circle cx="10.10" cy="15.30" r="3.70" fill="url(#cd2)"/><circle cx="15.40" cy="14.20" r="5.30" fill="url(#cd2)"/><circle cx="20.10" cy="17.10" r="3.80" fill="url(#cd2)"/></svg><svg class="abs" style="left:528.2px;top:296px" width="26" height="23" viewBox="0 0 26 23"><circle cx="13.4" cy="4.2" r="1.7" fill="#f5e27a"/><rect x="2.40" y="5.35" width="10.45" height="3.64" rx="1.82" fill="url(#cd)"/><circle cx="4.48" cy="6.81" r="2.08" fill="url(#cd)"/><circle cx="6.35" cy="4.10" r="2.70" fill="url(#cd)"/><circle cx="9.26" cy="4.62" r="2.39" fill="url(#cd)"/><circle cx="10.93" cy="6.91" r="1.92" fill="url(#cd)"/><rect x="14.80" y="5.82" width="9.05" height="3.15" rx="1.57" fill="url(#cd)"/><circle cx="16.60" cy="7.08" r="1.80" fill="url(#cd)"/><circle cx="18.22" cy="4.74" r="2.34" fill="url(#cd)"/><circle cx="20.74" cy="5.19" r="2.07" fill="url(#cd)"/><circle cx="22.18" cy="7.17" r="1.67" fill="url(#cd)"/><rect x="5.00" y="10.98" width="15.28" height="5.32" rx="2.66" fill="url(#cd3)"/><circle cx="8.04" cy="13.10" r="3.04" fill="url(#cd3)"/><circle cx="10.78" cy="9.15" r="3.95" fill="url(#cd3)"/><circle cx="15.03" cy="9.91" r="3.50" fill="url(#cd3)"/><circle cx="17.46" cy="13.26" r="2.81" fill="url(#cd3)"/><circle cx="3.3" cy="14.4" r="2.9" fill="url(#cd2)"/><circle cx="3.2" cy="17.2" r="2.8" fill="url(#cd2)"/><circle cx="5.5" cy="17.5" r="2.5" fill="url(#cd2)"/><rect x="3.95" y="14.88" width="19.40" height="6.80" rx="3.40" fill="#f2f9fe"/><circle cx="7.85" cy="17.48" r="3.90" fill="#f2f9fe"/><circle cx="9.55" cy="14.68" r="3.70" fill="#f2f9fe"/><circle cx="14.85" cy="13.58" r="5.30" fill="#f2f9fe"/><circle cx="19.55" cy="16.48" r="3.80" fill="#f2f9fe"/><rect x="4.50" y="15.50" width="19.40" height="6.80" rx="3.40" fill="url(#cd2)"/><circle cx="8.40" cy="18.10" r="3.90" fill="url(#cd2)"/><circle cx="10.10" cy="15.30" r="3.70" fill="url(#cd2)"/><circle cx="15.40" cy="14.20" r="5.30" fill="url(#cd2)"/><circle cx="20.10" cy="17.10" r="3.80" fill="url(#cd2)"/></svg><svg class="abs" style="left:555.2px;top:296px" width="26" height="23" viewBox="0 0 26 23"><rect x="2.40" y="4.90" width="10.85" height="3.78" rx="1.89" fill="url(#cn2)"/><circle cx="4.56" cy="6.42" r="2.16" fill="url(#cn2)"/><circle cx="6.50" cy="3.61" r="2.81" fill="url(#cn2)"/><circle cx="9.53" cy="4.15" r="2.48" fill="url(#cn2)"/><circle cx="11.26" cy="6.52" r="2.00" fill="url(#cn2)"/><rect x="14.80" y="5.62" width="9.05" height="3.15" rx="1.57" fill="url(#cn2)"/><circle cx="16.60" cy="6.88" r="1.80" fill="url(#cn2)"/><circle cx="18.22" cy="4.54" r="2.34" fill="url(#cn2)"/><circle cx="20.74" cy="4.99" r="2.07" fill="url(#cn2)"/><circle cx="22.18" cy="6.97" r="1.67" fill="url(#cn2)"/><rect x="5.00" y="10.53" width="15.68" height="5.46" rx="2.73" fill="url(#cn3)"/><circle cx="8.12" cy="12.71" r="3.12" fill="url(#cn3)"/><circle cx="10.93" cy="8.66" r="4.06" fill="url(#cn3)"/><circle cx="15.30" cy="9.44" r="3.59" fill="url(#cn3)"/><circle cx="17.79" cy="12.87" r="2.89" fill="url(#cn3)"/><circle cx="3.3" cy="14.4" r="2.9" fill="url(#cn)"/><circle cx="3.2" cy="17.2" r="2.8" fill="url(#cn)"/><circle cx="5.5" cy="17.5" r="2.5" fill="url(#cn)"/><rect x="3.95" y="14.48" width="19.40" height="6.80" rx="3.40" fill="#d2e2f4"/><circle cx="7.85" cy="17.08" r="3.90" fill="#d2e2f4"/><circle cx="9.55" cy="14.28" r="3.70" fill="#d2e2f4"/><circle cx="14.85" cy="13.18" r="5.30" fill="#d2e2f4"/><circle cx="19.55" cy="16.08" r="3.80" fill="#d2e2f4"/><rect x="4.50" y="15.10" width="19.40" height="6.80" rx="3.40" fill="url(#cn)"/><circle cx="8.40" cy="17.70" r="3.90" fill="url(#cn)"/><circle cx="10.10" cy="14.90" r="3.70" fill="url(#cn)"/><circle cx="15.40" cy="13.80" r="5.30" fill="url(#cn)"/><circle cx="20.10" cy="16.70" r="3.80" fill="url(#cn)"/></svg><svg class="abs" style="left:582.2px;top:296px" width="26" height="23" viewBox="0 0 26 23"><rect x="2.40" y="4.90" width="10.85" height="3.78" rx="1.89" fill="url(#cn2)"/><circle cx="4.56" cy="6.42" r="2.16" fill="url(#cn2)"/><circle cx="6.50" cy="3.61" r="2.81" fill="url(#cn2)"/><circle cx="9.53" cy="4.15" r="2.48" fill="url(#cn2)"/><circle cx="11.26" cy="6.52" r="2.00" fill="url(#cn2)"/><rect x="14.80" y="5.62" width="9.05" height="3.15" rx="1.57" fill="url(#cn2)"/><circle cx="16.60" cy="6.88" r="1.80" fill="url(#cn2)"/><circle cx="18.22" cy="4.54" r="2.34" fill="url(#cn2)"/><circle cx="20.74" cy="4.99" r="2.07" fill="url(#cn2)"/><circle cx="22.18" cy="6.97" r="1.67" fill="url(#cn2)"/><rect x="5.00" y="10.53" width="15.68" height="5.46" rx="2.73" fill="url(#cn3)"/><circle cx="8.12" cy="12.71" r="3.12" fill="url(#cn3)"/><circle cx="10.93" cy="8.66" r="4.06" fill="url(#cn3)"/><circle cx="15.30" cy="9.44" r="3.59" fill="url(#cn3)"/><circle cx="17.79" cy="12.87" r="2.89" fill="url(#cn3)"/><circle cx="3.3" cy="14.4" r="2.9" fill="url(#cn)"/><circle cx="3.2" cy="17.2" r="2.8" fill="url(#cn)"/><circle cx="5.5" cy="17.5" r="2.5" fill="url(#cn)"/><rect x="3.95" y="14.48" width="19.40" height="6.80" rx="3.40" fill="#d2e2f4"/><circle cx="7.85" cy="17.08" r="3.90" fill="#d2e2f4"/><circle cx="9.55" cy="14.28" r="3.70" fill="#d2e2f4"/><circle cx="14.85" cy="13.18" r="5.30" fill="#d2e2f4"/><circle cx="19.55" cy="16.08" r="3.80" fill="#d2e2f4"/><rect x="4.50" y="15.10" width="19.40" height="6.80" rx="3.40" fill="url(#cn)"/><circle cx="8.40" cy="17.70" r="3.90" fill="url(#cn)"/><circle cx="10.10" cy="14.90" r="3.70" fill="url(#cn)"/><circle cx="15.40" cy="13.80" r="5.30" fill="url(#cn)"/><circle cx="20.10" cy="16.70" r="3.80" fill="url(#cn)"/></svg><svg class="abs" style="left:609.2px;top:296px" width="26" height="23" viewBox="0 0 26 23"><rect x="2.40" y="4.90" width="10.85" height="3.78" rx="1.89" fill="url(#cn2)"/><circle cx="4.56" cy="6.42" r="2.16" fill="url(#cn2)"/><circle cx="6.50" cy="3.61" r="2.81" fill="url(#cn2)"/><circle cx="9.53" cy="4.15" r="2.48" fill="url(#cn2)"/><circle cx="11.26" cy="6.52" r="2.00" fill="url(#cn2)"/><rect x="14.80" y="5.62" width="9.05" height="3.15" rx="1.57" fill="url(#cn2)"/><circle cx="16.60" cy="6.88" r="1.80" fill="url(#cn2)"/><circle cx="18.22" cy="4.54" r="2.34" fill="url(#cn2)"/><circle cx="20.74" cy="4.99" r="2.07" fill="url(#cn2)"/><circle cx="22.18" cy="6.97" r="1.67" fill="url(#cn2)"/><rect x="5.00" y="10.53" width="15.68" height="5.46" rx="2.73" fill="url(#cn3)"/><circle cx="8.12" cy="12.71" r="3.12" fill="url(#cn3)"/><circle cx="10.93" cy="8.66" r="4.06" fill="url(#cn3)"/><circle cx="15.30" cy="9.44" r="3.59" fill="url(#cn3)"/><circle cx="17.79" cy="12.87" r="2.89" fill="url(#cn3)"/><circle cx="3.3" cy="14.4" r="2.9" fill="url(#cn)"/><circle cx="3.2" cy="17.2" r="2.8" fill="url(#cn)"/><circle cx="5.5" cy="17.5" r="2.5" fill="url(#cn)"/><rect x="3.95" y="14.48" width="19.40" height="6.80" rx="3.40" fill="#d2e2f4"/><circle cx="7.85" cy="17.08" r="3.90" fill="#d2e2f4"/><circle cx="9.55" cy="14.28" r="3.70" fill="#d2e2f4"/><circle cx="14.85" cy="13.18" r="5.30" fill="#d2e2f4"/><circle cx="19.55" cy="16.08" r="3.80" fill="#d2e2f4"/><rect x="4.50" y="15.10" width="19.40" height="6.80" rx="3.40" fill="url(#cn)"/><circle cx="8.40" cy="17.70" r="3.90" fill="url(#cn)"/><circle cx="10.10" cy="14.90" r="3.70" fill="url(#cn)"/><circle cx="15.40" cy="13.80" r="5.30" fill="url(#cn)"/><circle cx="20.10" cy="16.70" r="3.80" fill="url(#cn)"/></svg><svg class="abs" style="left:636.2px;top:296px" width="26" height="23" viewBox="0 0 26 23"><rect x="2.40" y="4.90" width="10.85" height="3.78" rx="1.89" fill="url(#cn2)"/><circle cx="4.56" cy="6.42" r="2.16" fill="url(#cn2)"/><circle cx="6.50" cy="3.61" r="2.81" fill="url(#cn2)"/><circle cx="9.53" cy="4.15" r="2.48" fill="url(#cn2)"/><circle cx="11.26" cy="6.52" r="2.00" fill="url(#cn2)"/><rect x="14.80" y="5.62" width="9.05" height="3.15" rx="1.57" fill="url(#cn2)"/><circle cx="16.60" cy="6.88" r="1.80" fill="url(#cn2)"/><circle cx="18.22" cy="4.54" r="2.34" fill="url(#cn2)"/><circle cx="20.74" cy="4.99" r="2.07" fill="url(#cn2)"/><circle cx="22.18" cy="6.97" r="1.67" fill="url(#cn2)"/><rect x="5.00" y="10.53" width="15.68" height="5.46" rx="2.73" fill="url(#cn3)"/><circle cx="8.12" cy="12.71" r="3.12" fill="url(#cn3)"/><circle cx="10.93" cy="8.66" r="4.06" fill="url(#cn3)"/><circle cx="15.30" cy="9.44" r="3.59" fill="url(#cn3)"/><circle cx="17.79" cy="12.87" r="2.89" fill="url(#cn3)"/><circle cx="3.3" cy="14.4" r="2.9" fill="url(#cn)"/><circle cx="3.2" cy="17.2" r="2.8" fill="url(#cn)"/><circle cx="5.5" cy="17.5" r="2.5" fill="url(#cn)"/><rect x="3.95" y="14.48" width="19.40" height="6.80" rx="3.40" fill="#d2e2f4"/><circle cx="7.85" cy="17.08" r="3.90" fill="#d2e2f4"/><circle cx="9.55" cy="14.28" r="3.70" fill="#d2e2f4"/><circle cx="14.85" cy="13.18" r="5.30" fill="#d2e2f4"/><circle cx="19.55" cy="16.08" r="3.80" fill="#d2e2f4"/><rect x="4.50" y="15.10" width="19.40" height="6.80" rx="3.40" fill="url(#cn)"/><circle cx="8.40" cy="17.70" r="3.90" fill="url(#cn)"/><circle cx="10.10" cy="14.90" r="3.70" fill="url(#cn)"/><circle cx="15.40" cy="13.80" r="5.30" fill="url(#cn)"/><circle cx="20.10" cy="16.70" r="3.80" fill="url(#cn)"/></svg><svg class="abs" style="left:663.2px;top:296px" width="26" height="23" viewBox="0 0 26 23"><rect x="2.40" y="4.90" width="10.85" height="3.78" rx="1.89" fill="url(#cn2)"/><circle cx="4.56" cy="6.42" r="2.16" fill="url(#cn2)"/><circle cx="6.50" cy="3.61" r="2.81" fill="url(#cn2)"/><circle cx="9.53" cy="4.15" r="2.48" fill="url(#cn2)"/><circle cx="11.26" cy="6.52" r="2.00" fill="url(#cn2)"/><rect x="14.80" y="5.62" width="9.05" height="3.15" rx="1.57" fill="url(#cn2)"/><circle cx="16.60" cy="6.88" r="1.80" fill="url(#cn2)"/><circle cx="18.22" cy="4.54" r="2.34" fill="url(#cn2)"/><circle cx="20.74" cy="4.99" r="2.07" fill="url(#cn2)"/><circle cx="22.18" cy="6.97" r="1.67" fill="url(#cn2)"/><rect x="5.00" y="10.53" width="15.68" height="5.46" rx="2.73" fill="url(#cn3)"/><circle cx="8.12" cy="12.71" r="3.12" fill="url(#cn3)"/><circle cx="10.93" cy="8.66" r="4.06" fill="url(#cn3)"/><circle cx="15.30" cy="9.44" r="3.59" fill="url(#cn3)"/><circle cx="17.79" cy="12.87" r="2.89" fill="url(#cn3)"/><circle cx="3.3" cy="14.4" r="2.9" fill="url(#cn)"/><circle cx="3.2" cy="17.2" r="2.8" fill="url(#cn)"/><circle cx="5.5" cy="17.5" r="2.5" fill="url(#cn)"/><rect x="3.95" y="14.48" width="19.40" height="6.80" rx="3.40" fill="#d2e2f4"/><circle cx="7.85" cy="17.08" r="3.90" fill="#d2e2f4"/><circle cx="9.55" cy="14.28" r="3.70" fill="#d2e2f4"/><circle cx="14.85" cy="13.18" r="5.30" fill="#d2e2f4"/><circle cx="19.55" cy="16.08" r="3.80" fill="#d2e2f4"/><rect x="4.50" y="15.10" width="19.40" height="6.80" rx="3.40" fill="url(#cn)"/><circle cx="8.40" cy="17.70" r="3.90" fill="url(#cn)"/><circle cx="10.10" cy="14.90" r="3.70" fill="url(#cn)"/><circle cx="15.40" cy="13.80" r="5.30" fill="url(#cn)"/><circle cx="20.10" cy="16.70" r="3.80" fill="url(#cn)"/></svg><svg class="abs" style="left:690.2px;top:296px" width="26" height="23" viewBox="0 0 26 23"><rect x="2.40" y="4.90" width="10.85" height="3.78" rx="1.89" fill="url(#cn2)"/><circle cx="4.56" cy="6.42" r="2.16" fill="url(#cn2)"/><circle cx="6.50" cy="3.61" r="2.81" fill="url(#cn2)"/><circle cx="9.53" cy="4.15" r="2.48" fill="url(#cn2)"/><circle cx="11.26" cy="6.52" r="2.00" fill="url(#cn2)"/><rect x="14.80" y="5.62" width="9.05" height="3.15" rx="1.57" fill="url(#cn2)"/><circle cx="16.60" cy="6.88" r="1.80" fill="url(#cn2)"/><circle cx="18.22" cy="4.54" r="2.34" fill="url(#cn2)"/><circle cx="20.74" cy="4.99" r="2.07" fill="url(#cn2)"/><circle cx="22.18" cy="6.97" r="1.67" fill="url(#cn2)"/><rect x="5.00" y="10.53" width="15.68" height="5.46" rx="2.73" fill="url(#cn3)"/><circle cx="8.12" cy="12.71" r="3.12" fill="url(#cn3)"/><circle cx="10.93" cy="8.66" r="4.06" fill="url(#cn3)"/><circle cx="15.30" cy="9.44" r="3.59" fill="url(#cn3)"/><circle cx="17.79" cy="12.87" r="2.89" fill="url(#cn3)"/><circle cx="3.3" cy="14.4" r="2.9" fill="url(#cn)"/><circle cx="3.2" cy="17.2" r="2.8" fill="url(#cn)"/><circle cx="5.5" cy="17.5" r="2.5" fill="url(#cn)"/><rect x="3.95" y="14.48" width="19.40" height="6.80" rx="3.40" fill="#d2e2f4"/><circle cx="7.85" cy="17.08" r="3.90" fill="#d2e2f4"/><circle cx="9.55" cy="14.28" r="3.70" fill="#d2e2f4"/><circle cx="14.85" cy="13.18" r="5.30" fill="#d2e2f4"/><circle cx="19.55" cy="16.08" r="3.80" fill="#d2e2f4"/><rect x="4.50" y="15.10" width="19.40" height="6.80" rx="3.40" fill="url(#cn)"/><circle cx="8.40" cy="17.70" r="3.90" fill="url(#cn)"/><circle cx="10.10" cy="14.90" r="3.70" fill="url(#cn)"/><circle cx="15.40" cy="13.80" r="5.30" fill="url(#cn)"/><circle cx="20.10" cy="16.70" r="3.80" fill="url(#cn)"/></svg><svg class="abs" style="left:717.2px;top:296px" width="26" height="23" viewBox="0 0 26 23"><rect x="2.40" y="4.90" width="10.85" height="3.78" rx="1.89" fill="url(#cn2)"/><circle cx="4.56" cy="6.42" r="2.16" fill="url(#cn2)"/><circle cx="6.50" cy="3.61" r="2.81" fill="url(#cn2)"/><circle cx="9.53" cy="4.15" r="2.48" fill="url(#cn2)"/><circle cx="11.26" cy="6.52" r="2.00" fill="url(#cn2)"/><rect x="14.80" y="5.62" width="9.05" height="3.15" rx="1.57" fill="url(#cn2)"/><circle cx="16.60" cy="6.88" r="1.80" fill="url(#cn2)"/><circle cx="18.22" cy="4.54" r="2.34" fill="url(#cn2)"/><circle cx="20.74" cy="4.99" r="2.07" fill="url(#cn2)"/><circle cx="22.18" cy="6.97" r="1.67" fill="url(#cn2)"/><rect x="5.00" y="10.53" width="15.68" height="5.46" rx="2.73" fill="url(#cn3)"/><circle cx="8.12" cy="12.71" r="3.12" fill="url(#cn3)"/><circle cx="10.93" cy="8.66" r="4.06" fill="url(#cn3)"/><circle cx="15.30" cy="9.44" r="3.59" fill="url(#cn3)"/><circle cx="17.79" cy="12.87" r="2.89" fill="url(#cn3)"/><circle cx="3.3" cy="14.4" r="2.9" fill="url(#cn)"/><circle cx="3.2" cy="17.2" r="2.8" fill="url(#cn)"/><circle cx="5.5" cy="17.5" r="2.5" fill="url(#cn)"/><rect x="3.95" y="14.48" width="19.40" height="6.80" rx="3.40" fill="#d2e2f4"/><circle cx="7.85" cy="17.08" r="3.90" fill="#d2e2f4"/><circle cx="9.55" cy="14.28" r="3.70" fill="#d2e2f4"/><circle cx="14.85" cy="13.18" r="5.30" fill="#d2e2f4"/><circle cx="19.55" cy="16.08" r="3.80" fill="#d2e2f4"/><rect x="4.50" y="15.10" width="19.40" height="6.80" rx="3.40" fill="url(#cn)"/><circle cx="8.40" cy="17.70" r="3.90" fill="url(#cn)"/><circle cx="10.10" cy="14.90" r="3.70" fill="url(#cn)"/><circle cx="15.40" cy="13.80" r="5.30" fill="url(#cn)"/><circle cx="20.10" cy="16.70" r="3.80" fill="url(#cn)"/></svg><svg class="abs" style="left:744.2px;top:296px" width="26" height="23" viewBox="0 0 26 23"><rect x="2.40" y="4.90" width="10.85" height="3.78" rx="1.89" fill="url(#cn2)"/><circle cx="4.56" cy="6.42" r="2.16" fill="url(#cn2)"/><circle cx="6.50" cy="3.61" r="2.81" fill="url(#cn2)"/><circle cx="9.53" cy="4.15" r="2.48" fill="url(#cn2)"/><circle cx="11.26" cy="6.52" r="2.00" fill="url(#cn2)"/><rect x="14.80" y="5.62" width="9.05" height="3.15" rx="1.57" fill="url(#cn2)"/><circle cx="16.60" cy="6.88" r="1.80" fill="url(#cn2)"/><circle cx="18.22" cy="4.54" r="2.34" fill="url(#cn2)"/><circle cx="20.74" cy="4.99" r="2.07" fill="url(#cn2)"/><circle cx="22.18" cy="6.97" r="1.67" fill="url(#cn2)"/><rect x="5.00" y="10.53" width="15.68" height="5.46" rx="2.73" fill="url(#cn3)"/><circle cx="8.12" cy="12.71" r="3.12" fill="url(#cn3)"/><circle cx="10.93" cy="8.66" r="4.06" fill="url(#cn3)"/><circle cx="15.30" cy="9.44" r="3.59" fill="url(#cn3)"/><circle cx="17.79" cy="12.87" r="2.89" fill="url(#cn3)"/><circle cx="3.3" cy="14.4" r="2.9" fill="url(#cn)"/><circle cx="3.2" cy="17.2" r="2.8" fill="url(#cn)"/><circle cx="5.5" cy="17.5" r="2.5" fill="url(#cn)"/><rect x="3.95" y="14.48" width="19.40" height="6.80" rx="3.40" fill="#d2e2f4"/><circle cx="7.85" cy="17.08" r="3.90" fill="#d2e2f4"/><circle cx="9.55" cy="14.28" r="3.70" fill="#d2e2f4"/><circle cx="14.85" cy="13.18" r="5.30" fill="#d2e2f4"/><circle cx="19.55" cy="16.08" r="3.80" fill="#d2e2f4"/><rect x="4.50" y="15.10" width="19.40" height="6.80" rx="3.40" fill="url(#cn)"/><circle cx="8.40" cy="17.70" r="3.90" fill="url(#cn)"/><circle cx="10.10" cy="14.90" r="3.70" fill="url(#cn)"/><circle cx="15.40" cy="13.80" r="5.30" fill="url(#cn)"/><circle cx="20.10" cy="16.70" r="3.80" fill="url(#cn)"/></svg><svg class="abs" style="left:772.2px;top:296px" width="26" height="23" viewBox="0 0 26 23"><rect x="4.00" y="4.55" width="10.45" height="3.64" rx="1.82" fill="url(#cn2)"/><circle cx="6.08" cy="6.01" r="2.08" fill="url(#cn2)"/><circle cx="7.95" cy="3.30" r="2.70" fill="url(#cn2)"/><circle cx="10.86" cy="3.82" r="2.39" fill="url(#cn2)"/><circle cx="12.53" cy="6.11" r="1.92" fill="url(#cn2)"/><rect x="15.40" y="5.19" width="8.44" height="2.94" rx="1.47" fill="url(#cn2)"/><circle cx="17.08" cy="6.37" r="1.68" fill="url(#cn2)"/><circle cx="18.59" cy="4.18" r="2.18" fill="url(#cn2)"/><circle cx="20.94" cy="4.60" r="1.93" fill="url(#cn2)"/><circle cx="22.29" cy="6.45" r="1.55" fill="url(#cn2)"/><rect x="15.60" y="9.34" width="7.24" height="2.52" rx="1.26" fill="url(#cn2)"/><circle cx="17.04" cy="10.34" r="1.44" fill="url(#cn2)"/><circle cx="18.34" cy="8.47" r="1.87" fill="url(#cn2)"/><circle cx="20.35" cy="8.83" r="1.66" fill="url(#cn2)"/><circle cx="21.50" cy="10.42" r="1.33" fill="url(#cn2)"/><rect x="4.50" y="8.31" width="12.46" height="4.34" rx="2.17" fill="url(#cn3)"/><circle cx="6.98" cy="10.05" r="2.48" fill="url(#cn3)"/><circle cx="9.21" cy="6.82" r="3.22" fill="url(#cn3)"/><circle cx="12.68" cy="7.44" r="2.85" fill="url(#cn3)"/><circle cx="14.67" cy="10.17" r="2.29" fill="url(#cn3)"/><rect x="1.05" y="12.66" width="15.52" height="5.44" rx="2.72" fill="#d2e2f4"/><circle cx="4.17" cy="14.74" r="3.12" fill="#d2e2f4"/><circle cx="5.53" cy="12.50" r="2.96" fill="#d2e2f4"/><circle cx="9.77" cy="11.62" r="4.24" fill="#d2e2f4"/><circle cx="13.53" cy="13.94" r="3.04" fill="#d2e2f4"/><rect x="1.60" y="13.28" width="15.52" height="5.44" rx="2.72" fill="url(#cn)"/><circle cx="4.72" cy="15.36" r="3.12" fill="url(#cn)"/><circle cx="6.08" cy="13.12" r="2.96" fill="url(#cn)"/><circle cx="10.32" cy="12.24" r="4.24" fill="url(#cn)"/><circle cx="14.08" cy="14.56" r="3.04" fill="url(#cn)"/></svg><svg class="abs" style="left:799.2px;top:296px" width="26" height="23" viewBox="0 0 26 23"><rect x="2.40" y="4.90" width="10.85" height="3.78" rx="1.89" fill="url(#cn2)"/><circle cx="4.56" cy="6.42" r="2.16" fill="url(#cn2)"/><circle cx="6.50" cy="3.61" r="2.81" fill="url(#cn2)"/><circle cx="9.53" cy="4.15" r="2.48" fill="url(#cn2)"/><circle cx="11.26" cy="6.52" r="2.00" fill="url(#cn2)"/><rect x="14.80" y="5.62" width="9.05" height="3.15" rx="1.57" fill="url(#cn2)"/><circle cx="16.60" cy="6.88" r="1.80" fill="url(#cn2)"/><circle cx="18.22" cy="4.54" r="2.34" fill="url(#cn2)"/><circle cx="20.74" cy="4.99" r="2.07" fill="url(#cn2)"/><circle cx="22.18" cy="6.97" r="1.67" fill="url(#cn2)"/><rect x="5.00" y="10.53" width="15.68" height="5.46" rx="2.73" fill="url(#cn3)"/><circle cx="8.12" cy="12.71" r="3.12" fill="url(#cn3)"/><circle cx="10.93" cy="8.66" r="4.06" fill="url(#cn3)"/><circle cx="15.30" cy="9.44" r="3.59" fill="url(#cn3)"/><circle cx="17.79" cy="12.87" r="2.89" fill="url(#cn3)"/><circle cx="3.3" cy="14.4" r="2.9" fill="url(#cn)"/><circle cx="3.2" cy="17.2" r="2.8" fill="url(#cn)"/><circle cx="5.5" cy="17.5" r="2.5" fill="url(#cn)"/><rect x="3.95" y="14.48" width="19.40" height="6.80" rx="3.40" fill="#d2e2f4"/><circle cx="7.85" cy="17.08" r="3.90" fill="#d2e2f4"/><circle cx="9.55" cy="14.28" r="3.70" fill="#d2e2f4"/><circle cx="14.85" cy="13.18" r="5.30" fill="#d2e2f4"/><circle cx="19.55" cy="16.08" r="3.80" fill="#d2e2f4"/><rect x="4.50" y="15.10" width="19.40" height="6.80" rx="3.40" fill="url(#cn)"/><circle cx="8.40" cy="17.70" r="3.90" fill="url(#cn)"/><circle cx="10.10" cy="14.90" r="3.70" fill="url(#cn)"/><circle cx="15.40" cy="13.80" r="5.30" fill="url(#cn)"/><circle cx="20.10" cy="16.70" r="3.80" fill="url(#cn)"/></svg><svg class="abs" style="left:826.2px;top:296px" width="26" height="23" viewBox="0 0 26 23"><rect x="2.40" y="4.90" width="10.85" height="3.78" rx="1.89" fill="url(#cn2)"/><circle cx="4.56" cy="6.42" r="2.16" fill="url(#cn2)"/><circle cx="6.50" cy="3.61" r="2.81" fill="url(#cn2)"/><circle cx="9.53" cy="4.15" r="2.48" fill="url(#cn2)"/><circle cx="11.26" cy="6.52" r="2.00" fill="url(#cn2)"/><rect x="14.80" y="5.62" width="9.05" height="3.15" rx="1.57" fill="url(#cn2)"/><circle cx="16.60" cy="6.88" r="1.80" fill="url(#cn2)"/><circle cx="18.22" cy="4.54" r="2.34" fill="url(#cn2)"/><circle cx="20.74" cy="4.99" r="2.07" fill="url(#cn2)"/><circle cx="22.18" cy="6.97" r="1.67" fill="url(#cn2)"/><rect x="5.00" y="10.53" width="15.68" height="5.46" rx="2.73" fill="url(#cn3)"/><circle cx="8.12" cy="12.71" r="3.12" fill="url(#cn3)"/><circle cx="10.93" cy="8.66" r="4.06" fill="url(#cn3)"/><circle cx="15.30" cy="9.44" r="3.59" fill="url(#cn3)"/><circle cx="17.79" cy="12.87" r="2.89" fill="url(#cn3)"/><circle cx="3.3" cy="14.4" r="2.9" fill="url(#cn)"/><circle cx="3.2" cy="17.2" r="2.8" fill="url(#cn)"/><circle cx="5.5" cy="17.5" r="2.5" fill="url(#cn)"/><rect x="3.95" y="14.48" width="19.40" height="6.80" rx="3.40" fill="#d2e2f4"/><circle cx="7.85" cy="17.08" r="3.90" fill="#d2e2f4"/><circle cx="9.55" cy="14.28" r="3.70" fill="#d2e2f4"/><circle cx="14.85" cy="13.18" r="5.30" fill="#d2e2f4"/><circle cx="19.55" cy="16.08" r="3.80" fill="#d2e2f4"/><rect x="4.50" y="15.10" width="19.40" height="6.80" rx="3.40" fill="url(#cn)"/><circle cx="8.40" cy="17.70" r="3.90" fill="url(#cn)"/><circle cx="10.10" cy="14.90" r="3.70" fill="url(#cn)"/><circle cx="15.40" cy="13.80" r="5.30" fill="url(#cn)"/><circle cx="20.10" cy="16.70" r="3.80" fill="url(#cn)"/></svg><svg class="abs" style="left:853.2px;top:296px" width="26" height="23" viewBox="0 0 26 23"><rect x="2.40" y="4.90" width="10.85" height="3.78" rx="1.89" fill="url(#cn2)"/><circle cx="4.56" cy="6.42" r="2.16" fill="url(#cn2)"/><circle cx="6.50" cy="3.61" r="2.81" fill="url(#cn2)"/><circle cx="9.53" cy="4.15" r="2.48" fill="url(#cn2)"/><circle cx="11.26" cy="6.52" r="2.00" fill="url(#cn2)"/><rect x="14.80" y="5.62" width="9.05" height="3.15" rx="1.57" fill="url(#cn2)"/><circle cx="16.60" cy="6.88" r="1.80" fill="url(#cn2)"/><circle cx="18.22" cy="4.54" r="2.34" fill="url(#cn2)"/><circle cx="20.74" cy="4.99" r="2.07" fill="url(#cn2)"/><circle cx="22.18" cy="6.97" r="1.67" fill="url(#cn2)"/><rect x="5.00" y="10.53" width="15.68" height="5.46" rx="2.73" fill="url(#cn3)"/><circle cx="8.12" cy="12.71" r="3.12" fill="url(#cn3)"/><circle cx="10.93" cy="8.66" r="4.06" fill="url(#cn3)"/><circle cx="15.30" cy="9.44" r="3.59" fill="url(#cn3)"/><circle cx="17.79" cy="12.87" r="2.89" fill="url(#cn3)"/><circle cx="3.3" cy="14.4" r="2.9" fill="url(#cn)"/><circle cx="3.2" cy="17.2" r="2.8" fill="url(#cn)"/><circle cx="5.5" cy="17.5" r="2.5" fill="url(#cn)"/><rect x="3.95" y="14.48" width="19.40" height="6.80" rx="3.40" fill="#d2e2f4"/><circle cx="7.85" cy="17.08" r="3.90" fill="#d2e2f4"/><circle cx="9.55" cy="14.28" r="3.70" fill="#d2e2f4"/><circle cx="14.85" cy="13.18" r="5.30" fill="#d2e2f4"/><circle cx="19.55" cy="16.08" r="3.80" fill="#d2e2f4"/><rect x="4.50" y="15.10" width="19.40" height="6.80" rx="3.40" fill="url(#cn)"/><circle cx="8.40" cy="17.70" r="3.90" fill="url(#cn)"/><circle cx="10.10" cy="14.90" r="3.70" fill="url(#cn)"/><circle cx="15.40" cy="13.80" r="5.30" fill="url(#cn)"/><circle cx="20.10" cy="16.70" r="3.80" fill="url(#cn)"/></svg><svg class="abs" style="left:880.2px;top:296px" width="26" height="23" viewBox="0 0 26 23"><rect x="2.40" y="4.90" width="10.85" height="3.78" rx="1.89" fill="url(#cn2)"/><circle cx="4.56" cy="6.42" r="2.16" fill="url(#cn2)"/><circle cx="6.50" cy="3.61" r="2.81" fill="url(#cn2)"/><circle cx="9.53" cy="4.15" r="2.48" fill="url(#cn2)"/><circle cx="11.26" cy="6.52" r="2.00" fill="url(#cn2)"/><rect x="14.80" y="5.62" width="9.05" height="3.15" rx="1.57" fill="url(#cn2)"/><circle cx="16.60" cy="6.88" r="1.80" fill="url(#cn2)"/><circle cx="18.22" cy="4.54" r="2.34" fill="url(#cn2)"/><circle cx="20.74" cy="4.99" r="2.07" fill="url(#cn2)"/><circle cx="22.18" cy="6.97" r="1.67" fill="url(#cn2)"/><rect x="5.00" y="10.53" width="15.68" height="5.46" rx="2.73" fill="url(#cn3)"/><circle cx="8.12" cy="12.71" r="3.12" fill="url(#cn3)"/><circle cx="10.93" cy="8.66" r="4.06" fill="url(#cn3)"/><circle cx="15.30" cy="9.44" r="3.59" fill="url(#cn3)"/><circle cx="17.79" cy="12.87" r="2.89" fill="url(#cn3)"/><circle cx="3.3" cy="14.4" r="2.9" fill="url(#cn)"/><circle cx="3.2" cy="17.2" r="2.8" fill="url(#cn)"/><circle cx="5.5" cy="17.5" r="2.5" fill="url(#cn)"/><rect x="3.95" y="14.48" width="19.40" height="6.80" rx="3.40" fill="#d2e2f4"/><circle cx="7.85" cy="17.08" r="3.90" fill="#d2e2f4"/><circle cx="9.55" cy="14.28" r="3.70" fill="#d2e2f4"/><circle cx="14.85" cy="13.18" r="5.30" fill="#d2e2f4"/><circle cx="19.55" cy="16.08" r="3.80" fill="#d2e2f4"/><rect x="4.50" y="15.10" width="19.40" height="6.80" rx="3.40" fill="url(#cn)"/><circle cx="8.40" cy="17.70" r="3.90" fill="url(#cn)"/><circle cx="10.10" cy="14.90" r="3.70" fill="url(#cn)"/><circle cx="15.40" cy="13.80" r="5.30" fill="url(#cn)"/><circle cx="20.10" cy="16.70" r="3.80" fill="url(#cn)"/></svg><svg class="abs" style="left:907.2px;top:296px" width="26" height="23" viewBox="0 0 26 23"><rect x="2.40" y="4.90" width="10.85" height="3.78" rx="1.89" fill="url(#cn2)"/><circle cx="4.56" cy="6.42" r="2.16" fill="url(#cn2)"/><circle cx="6.50" cy="3.61" r="2.81" fill="url(#cn2)"/><circle cx="9.53" cy="4.15" r="2.48" fill="url(#cn2)"/><circle cx="11.26" cy="6.52" r="2.00" fill="url(#cn2)"/><rect x="14.80" y="5.62" width="9.05" height="3.15" rx="1.57" fill="url(#cn2)"/><circle cx="16.60" cy="6.88" r="1.80" fill="url(#cn2)"/><circle cx="18.22" cy="4.54" r="2.34" fill="url(#cn2)"/><circle cx="20.74" cy="4.99" r="2.07" fill="url(#cn2)"/><circle cx="22.18" cy="6.97" r="1.67" fill="url(#cn2)"/><rect x="5.00" y="10.53" width="15.68" height="5.46" rx="2.73" fill="url(#cn3)"/><circle cx="8.12" cy="12.71" r="3.12" fill="url(#cn3)"/><circle cx="10.93" cy="8.66" r="4.06" fill="url(#cn3)"/><circle cx="15.30" cy="9.44" r="3.59" fill="url(#cn3)"/><circle cx="17.79" cy="12.87" r="2.89" fill="url(#cn3)"/><circle cx="3.3" cy="14.4" r="2.9" fill="url(#cn)"/><circle cx="3.2" cy="17.2" r="2.8" fill="url(#cn)"/><circle cx="5.5" cy="17.5" r="2.5" fill="url(#cn)"/><rect x="3.95" y="14.48" width="19.40" height="6.80" rx="3.40" fill="#d2e2f4"/><circle cx="7.85" cy="17.08" r="3.90" fill="#d2e2f4"/><circle cx="9.55" cy="14.28" r="3.70" fill="#d2e2f4"/><circle cx="14.85" cy="13.18" r="5.30" fill="#d2e2f4"/><circle cx="19.55" cy="16.08" r="3.80" fill="#d2e2f4"/><rect x="4.50" y="15.10" width="19.40" height="6.80" rx="3.40" fill="url(#cn)"/><circle cx="8.40" cy="17.70" r="3.90" fill="url(#cn)"/><circle cx="10.10" cy="14.90" r="3.70" fill="url(#cn)"/><circle cx="15.40" cy="13.80" r="5.30" fill="url(#cn)"/><circle cx="20.10" cy="16.70" r="3.80" fill="url(#cn)"/></svg><div class="abs" style="left:933px;top:296px;width:3px;height:23px;overflow:hidden"><div style="position:absolute;left:-933px;top:-296px"><svg class="abs" style="left:934.2px;top:296px" width="26" height="23" viewBox="0 0 26 23"><rect x="2.40" y="4.90" width="10.85" height="3.78" rx="1.89" fill="url(#cn2)"/><circle cx="4.56" cy="6.42" r="2.16" fill="url(#cn2)"/><circle cx="6.50" cy="3.61" r="2.81" fill="url(#cn2)"/><circle cx="9.53" cy="4.15" r="2.48" fill="url(#cn2)"/><circle cx="11.26" cy="6.52" r="2.00" fill="url(#cn2)"/><rect x="14.80" y="5.62" width="9.05" height="3.15" rx="1.57" fill="url(#cn2)"/><circle cx="16.60" cy="6.88" r="1.80" fill="url(#cn2)"/><circle cx="18.22" cy="4.54" r="2.34" fill="url(#cn2)"/><circle cx="20.74" cy="4.99" r="2.07" fill="url(#cn2)"/><circle cx="22.18" cy="6.97" r="1.67" fill="url(#cn2)"/><rect x="5.00" y="10.53" width="15.68" height="5.46" rx="2.73" fill="url(#cn3)"/><circle cx="8.12" cy="12.71" r="3.12" fill="url(#cn3)"/><circle cx="10.93" cy="8.66" r="4.06" fill="url(#cn3)"/><circle cx="15.30" cy="9.44" r="3.59" fill="url(#cn3)"/><circle cx="17.79" cy="12.87" r="2.89" fill="url(#cn3)"/><circle cx="3.3" cy="14.4" r="2.9" fill="url(#cn)"/><circle cx="3.2" cy="17.2" r="2.8" fill="url(#cn)"/><circle cx="5.5" cy="17.5" r="2.5" fill="url(#cn)"/><rect x="3.95" y="14.48" width="19.40" height="6.80" rx="3.40" fill="#d2e2f4"/><circle cx="7.85" cy="17.08" r="3.90" fill="#d2e2f4"/><circle cx="9.55" cy="14.28" r="3.70" fill="#d2e2f4"/><circle cx="14.85" cy="13.18" r="5.30" fill="#d2e2f4"/><circle cx="19.55" cy="16.08" r="3.80" fill="#d2e2f4"/><rect x="4.50" y="15.10" width="19.40" height="6.80" rx="3.40" fill="url(#cn)"/><circle cx="8.40" cy="17.70" r="3.90" fill="url(#cn)"/><circle cx="10.10" cy="14.90" r="3.70" fill="url(#cn)"/><circle cx="15.40" cy="13.80" r="5.30" fill="url(#cn)"/><circle cx="20.10" cy="16.70" r="3.80" fill="url(#cn)"/></svg></div></div><svg class="abs" style="left:577.3px;top:323px" width="9" height="14" viewBox="0 0 9 14"><path d="M7.6 0.6C6.2 3.6 1 8 1.2 11 1.4 13.2 4 13.6 5.2 12 6.6 10 7.2 4.5 7.6 0.6z" fill="url(#dr)"/></svg><svg class="abs" style="left:604.3px;top:323px" width="9" height="14" viewBox="0 0 9 14"><path d="M7.6 0.6C6.2 3.6 1 8 1.2 11 1.4 13.2 4 13.6 5.2 12 6.6 10 7.2 4.5 7.6 0.6z" fill="url(#dr)"/></svg><svg class="abs" style="left:685.3px;top:323px" width="9" height="14" viewBox="0 0 9 14"><path d="M7.6 0.6C6.2 3.6 1 8 1.2 11 1.4 13.2 4 13.6 5.2 12 6.6 10 7.2 4.5 7.6 0.6z" fill="url(#dr)"/></svg><svg class="abs" style="left:712.3px;top:323px" width="9" height="14" viewBox="0 0 9 14"><path d="M7.6 0.6C6.2 3.6 1 8 1.2 11 1.4 13.2 4 13.6 5.2 12 6.6 10 7.2 4.5 7.6 0.6z" fill="url(#dr)"/></svg><svg class="abs" style="left:739.3px;top:323px" width="9" height="14" viewBox="0 0 9 14"><path d="M7.6 0.6C6.2 3.6 1 8 1.2 11 1.4 13.2 4 13.6 5.2 12 6.6 10 7.2 4.5 7.6 0.6z" fill="url(#dr)"/></svg><svg class="abs" style="left:768.3px;top:323px" width="9" height="14" viewBox="0 0 9 14"><path d="M7.6 0.6C6.2 3.6 1 8 1.2 11 1.4 13.2 4 13.6 5.2 12 6.6 10 7.2 4.5 7.6 0.6z" fill="url(#dr)"/></svg><svg class="abs" style="left:794.3px;top:323px" width="9" height="14" viewBox="0 0 9 14"><path d="M7.6 0.6C6.2 3.6 1 8 1.2 11 1.4 13.2 4 13.6 5.2 12 6.6 10 7.2 4.5 7.6 0.6z" fill="url(#dr)"/></svg><svg class="abs" style="left:821.3px;top:323px" width="9" height="14" viewBox="0 0 9 14"><path d="M7.6 0.6C6.2 3.6 1 8 1.2 11 1.4 13.2 4 13.6 5.2 12 6.6 10 7.2 4.5 7.6 0.6z" fill="url(#dr)"/></svg><svg class="abs" style="left:902.3px;top:323px" width="9" height="14" viewBox="0 0 9 14"><path d="M7.6 0.6C6.2 3.6 1 8 1.2 11 1.4 13.2 4 13.6 5.2 12 6.6 10 7.2 4.5 7.6 0.6z" fill="url(#dr)"/></svg><svg class="abs" style="left:930.5px;top:323px" width="5.5" height="14" viewBox="0 0 9 14" preserveAspectRatio="xMinYMin slice"><path d="M7.6 0.6C6.2 3.6 1 8 1.2 11 1.4 13.2 4 13.6 5.2 12 6.6 10 7.2 4.5 7.6 0.6z" fill="url(#dr)"/></svg><svg class="abs" style="left:149px;top:346px" width="27" height="22" viewBox="0 0 27 22"><ellipse cx="13.5" cy="11.5" rx="12.5" ry="9.5" fill="url(#fg)"/><ellipse cx="9.5" cy="9" rx="8" ry="6" fill="url(#fg)"/><ellipse cx="17.5" cy="13.5" rx="8" ry="6" fill="url(#fg)"/></svg><svg class="abs" style="left:176px;top:346px" width="27" height="22" viewBox="0 0 27 22"><ellipse cx="13.5" cy="11.5" rx="12.5" ry="9.5" fill="url(#fg)"/><ellipse cx="9.5" cy="9" rx="8" ry="6" fill="url(#fg)"/><ellipse cx="17.5" cy="13.5" rx="8" ry="6" fill="url(#fg)"/></svg><svg class="abs" style="left:419px;top:346px" width="27" height="22" viewBox="0 0 27 22"><ellipse cx="13.5" cy="11.5" rx="12.5" ry="9.5" fill="url(#fg)"/><ellipse cx="9.5" cy="9" rx="8" ry="6" fill="url(#fg)"/><ellipse cx="17.5" cy="13.5" rx="8" ry="6" fill="url(#fg)"/></svg><svg class="abs" style="left:446px;top:346px" width="27" height="22" viewBox="0 0 27 22"><ellipse cx="13.5" cy="11.5" rx="12.5" ry="9.5" fill="url(#fg)"/><ellipse cx="9.5" cy="9" rx="8" ry="6" fill="url(#fg)"/><ellipse cx="17.5" cy="13.5" rx="8" ry="6" fill="url(#fg)"/></svg><svg class="abs" style="left:473px;top:346px" width="27" height="22" viewBox="0 0 27 22"><ellipse cx="13.5" cy="11.5" rx="12.5" ry="9.5" fill="url(#fg)"/><ellipse cx="9.5" cy="9" rx="8" ry="6" fill="url(#fg)"/><ellipse cx="17.5" cy="13.5" rx="8" ry="6" fill="url(#fg)"/></svg><svg class="abs" style="left:500px;top:346px" width="27" height="22" viewBox="0 0 27 22"><ellipse cx="13.5" cy="11.5" rx="12.5" ry="9.5" fill="url(#fg)"/><ellipse cx="9.5" cy="9" rx="8" ry="6" fill="url(#fg)"/><ellipse cx="17.5" cy="13.5" rx="8" ry="6" fill="url(#fg)"/></svg><svg class="abs" style="left:527px;top:346px" width="27" height="22" viewBox="0 0 27 22"><ellipse cx="13.5" cy="11.5" rx="12.5" ry="9.5" fill="url(#fg)"/><ellipse cx="9.5" cy="9" rx="8" ry="6" fill="url(#fg)"/><ellipse cx="17.5" cy="13.5" rx="8" ry="6" fill="url(#fg)"/></svg><svg class="abs" style="left:554px;top:346px" width="27" height="22" viewBox="0 0 27 22"><ellipse cx="13.5" cy="11.5" rx="12.5" ry="9.5" fill="url(#fg)"/><ellipse cx="9.5" cy="9" rx="8" ry="6" fill="url(#fg)"/><ellipse cx="17.5" cy="13.5" rx="8" ry="6" fill="url(#fg)"/></svg><svg class="abs" style="left:581px;top:346px" width="27" height="22" viewBox="0 0 27 22"><ellipse cx="13.5" cy="11.5" rx="12.5" ry="9.5" fill="url(#fg)"/><ellipse cx="9.5" cy="9" rx="8" ry="6" fill="url(#fg)"/><ellipse cx="17.5" cy="13.5" rx="8" ry="6" fill="url(#fg)"/></svg><svg class="abs" style="left:608px;top:346px" width="27" height="22" viewBox="0 0 27 22"><ellipse cx="13.5" cy="11.5" rx="12.5" ry="9.5" fill="url(#fg)"/><ellipse cx="9.5" cy="9" rx="8" ry="6" fill="url(#fg)"/><ellipse cx="17.5" cy="13.5" rx="8" ry="6" fill="url(#fg)"/></svg><svg class="abs" style="left:635px;top:346px" width="27" height="22" viewBox="0 0 27 22"><ellipse cx="13.5" cy="11.5" rx="12.5" ry="9.5" fill="url(#fg)"/><ellipse cx="9.5" cy="9" rx="8" ry="6" fill="url(#fg)"/><ellipse cx="17.5" cy="13.5" rx="8" ry="6" fill="url(#fg)"/></svg><svg class="abs" style="left:662px;top:346px" width="27" height="22" viewBox="0 0 27 22"><ellipse cx="13.5" cy="11.5" rx="12.5" ry="9.5" fill="url(#fg)"/><ellipse cx="9.5" cy="9" rx="8" ry="6" fill="url(#fg)"/><ellipse cx="17.5" cy="13.5" rx="8" ry="6" fill="url(#fg)"/></svg><svg class="abs" style="left:689px;top:346px" width="27" height="22" viewBox="0 0 27 22"><ellipse cx="13.5" cy="11.5" rx="12.5" ry="9.5" fill="url(#fg)"/><ellipse cx="9.5" cy="9" rx="8" ry="6" fill="url(#fg)"/><ellipse cx="17.5" cy="13.5" rx="8" ry="6" fill="url(#fg)"/></svg><svg class="abs" style="left:716px;top:346px" width="27" height="22" viewBox="0 0 27 22"><ellipse cx="13.5" cy="11.5" rx="12.5" ry="9.5" fill="url(#fg)"/><ellipse cx="9.5" cy="9" rx="8" ry="6" fill="url(#fg)"/><ellipse cx="17.5" cy="13.5" rx="8" ry="6" fill="url(#fg)"/></svg><svg class="abs" style="left:743px;top:346px" width="27" height="22" viewBox="0 0 27 22"><ellipse cx="13.5" cy="11.5" rx="12.5" ry="9.5" fill="url(#fg)"/><ellipse cx="9.5" cy="9" rx="8" ry="6" fill="url(#fg)"/><ellipse cx="17.5" cy="13.5" rx="8" ry="6" fill="url(#fg)"/></svg><svg class="abs" style="left:771px;top:346px" width="27" height="22" viewBox="0 0 27 22"><ellipse cx="13.5" cy="11.5" rx="12.5" ry="9.5" fill="url(#fg)"/><ellipse cx="9.5" cy="9" rx="8" ry="6" fill="url(#fg)"/><ellipse cx="17.5" cy="13.5" rx="8" ry="6" fill="url(#fg)"/></svg><svg class="abs" style="left:798px;top:346px" width="27" height="22" viewBox="0 0 27 22"><ellipse cx="13.5" cy="11.5" rx="12.5" ry="9.5" fill="url(#fg)"/><ellipse cx="9.5" cy="9" rx="8" ry="6" fill="url(#fg)"/><ellipse cx="17.5" cy="13.5" rx="8" ry="6" fill="url(#fg)"/></svg><svg class="abs" style="left:825px;top:346px" width="27" height="22" viewBox="0 0 27 22"><ellipse cx="13.5" cy="11.5" rx="12.5" ry="9.5" fill="url(#fg)"/><ellipse cx="9.5" cy="9" rx="8" ry="6" fill="url(#fg)"/><ellipse cx="17.5" cy="13.5" rx="8" ry="6" fill="url(#fg)"/></svg><svg class="abs" style="left:852px;top:346px" width="27" height="22" viewBox="0 0 27 22"><ellipse cx="13.5" cy="11.5" rx="12.5" ry="9.5" fill="url(#fg)"/><ellipse cx="9.5" cy="9" rx="8" ry="6" fill="url(#fg)"/><ellipse cx="17.5" cy="13.5" rx="8" ry="6" fill="url(#fg)"/></svg><svg class="abs" style="left:879px;top:346px" width="27" height="22" viewBox="0 0 27 22"><ellipse cx="13.5" cy="11.5" rx="12.5" ry="9.5" fill="url(#fg)"/><ellipse cx="9.5" cy="9" rx="8" ry="6" fill="url(#fg)"/><ellipse cx="17.5" cy="13.5" rx="8" ry="6" fill="url(#fg)"/></svg><svg class="abs" style="left:906px;top:346px" width="27" height="22" viewBox="0 0 27 22"><ellipse cx="13.5" cy="11.5" rx="12.5" ry="9.5" fill="url(#fg)"/><ellipse cx="9.5" cy="9" rx="8" ry="6" fill="url(#fg)"/><ellipse cx="17.5" cy="13.5" rx="8" ry="6" fill="url(#fg)"/></svg><svg class="abs" style="left:933.5px;top:346px" width="2.5" height="22" viewBox="0 0 2.5 22"><ellipse cx="13.5" cy="11.5" rx="11.5" ry="8.5" fill="url(#fg)"/></svg>
<div class="c" style="left:149px;top:278.799px;font-size:10.3px;color:#0a0a14;letter-spacing:-0.5px">01</div>
<div class="c" style="left:176px;top:278.799px;font-size:10.3px;color:#0a0a14;letter-spacing:-0.5px">02</div>
<div class="c" style="left:203px;top:278.799px;font-size:10.3px;color:#0a0a14;letter-spacing:-0.5px">03</div>
<div class="c" style="left:230px;top:278.799px;font-size:10.3px;color:#0a0a14;letter-spacing:-0.5px">04</div>
<div class="c" style="left:257px;top:278.799px;font-size:10.3px;color:#0a0a14;letter-spacing:-0.5px">05</div>
<div class="c" style="left:284px;top:278.799px;font-size:10.3px;color:#0a0a14;letter-spacing:-0.5px">06</div>
<div class="c" style="left:311px;top:278.799px;font-size:10.3px;color:#0a0a14;letter-spacing:-0.5px">07</div>
<div class="c" style="left:338px;top:278.799px;font-size:10.3px;color:#0a0a14;letter-spacing:-0.5px">08</div>
<div class="c" style="left:365px;top:278.799px;font-size:10.3px;color:#0a0a14;letter-spacing:-0.5px">09</div>
<div class="c" style="left:392px;top:278.799px;font-size:10.3px;color:#0a0a14;letter-spacing:-0.5px">10</div>
<div class="c" style="left:419px;top:278.799px;font-size:10.3px;color:#0a0a14;letter-spacing:-0.5px">11</div>
<div class="c" style="left:446px;top:278.799px;font-size:10.3px;color:#0a0a14;letter-spacing:-0.5px">12</div>
<div class="c" style="left:473px;top:278.799px;font-size:10.3px;color:#0a0a14;letter-spacing:-0.5px">13</div>
<div class="c" style="left:500px;top:278.799px;font-size:10.3px;color:#0a0a14;letter-spacing:-0.5px">14</div>
<div class="c" style="left:527px;top:278.799px;font-size:10.3px;color:#0a0a14;letter-spacing:-0.5px">15</div>
<div class="c" style="left:554px;top:278.799px;font-size:10.3px;color:#0a0a14;letter-spacing:-0.5px">16</div>
<div class="c" style="left:581px;top:278.799px;font-size:10.3px;color:#0a0a14;letter-spacing:-0.5px">17</div>
<div class="c" style="left:608px;top:278.799px;font-size:10.3px;color:#0a0a14;letter-spacing:-0.5px">18</div>
<div class="c" style="left:635px;top:278.799px;font-size:10.3px;color:#0a0a14;letter-spacing:-0.5px">19</div>
<div class="c" style="left:662px;top:278.799px;font-size:10.3px;color:#0a0a14;letter-spacing:-0.5px">20</div>
<div class="c" style="left:689px;top:278.799px;font-size:10.3px;color:#0a0a14;letter-spacing:-0.5px">21</div>
<div class="c" style="left:716px;top:278.799px;font-size:10.3px;color:#0a0a14;letter-spacing:-0.5px">22</div>
<div class="c" style="left:743px;top:278.799px;font-size:10.3px;color:#0a0a14;letter-spacing:-0.5px">23</div>
<div class="c" style="left:771px;top:278.799px;font-size:10.3px;color:#0a0a14;letter-spacing:-0.5px">00</div>
<div class="c" style="left:798px;top:278.799px;font-size:10.3px;color:#0a0a14;letter-spacing:-0.5px">01</div>
<div class="c" style="left:825px;top:278.799px;font-size:10.3px;color:#0a0a14;letter-spacing:-0.5px">02</div>
<div class="c" style="left:852px;top:278.799px;font-size:10.3px;color:#0a0a14;letter-spacing:-0.5px">03</div>
<div class="c" style="left:879px;top:278.799px;font-size:10.3px;color:#0a0a14;letter-spacing:-0.5px">04</div>
<div class="c" style="left:906px;top:278.799px;font-size:10.3px;color:#0a0a14;letter-spacing:-0.5px">05</div>
<div class="c" style="left:149px;top:354.124px;font-size:10.75px;color:#000">2</div>
<div class="c" style="left:176px;top:354.124px;font-size:10.75px;color:#000">2</div>
<div class="c" style="left:419px;top:354.124px;font-size:10.75px;color:#000">7</div>
<div class="c" style="left:446px;top:354.124px;font-size:10.75px;color:#000">10</div>
<div class="c" style="left:473px;top:354.124px;font-size:10.75px;color:#000">10</div>
<div class="c" style="left:500px;top:354.124px;font-size:10.75px;color:#000">10</div>
<div class="c" style="left:527px;top:354.124px;font-size:10.75px;color:#000">19</div>
<div class="c" style="left:554px;top:354.124px;font-size:10.75px;color:#000">21</div>
<div class="c" style="left:581px;top:354.124px;font-size:10.75px;color:#000">36</div>
<div class="c" style="left:608px;top:354.124px;font-size:10.75px;color:#000">35</div>
<div class="c" style="left:635px;top:354.124px;font-size:10.75px;color:#000">24</div>
<div class="c" style="left:662px;top:354.124px;font-size:10.75px;color:#000">17</div>
<div class="c" style="left:689px;top:354.124px;font-size:10.75px;color:#000">22</div>
<div class="c" style="left:716px;top:354.124px;font-size:10.75px;color:#000">34</div>
<div class="c" style="left:743px;top:354.124px;font-size:10.75px;color:#000">44</div>
<div class="c" style="left:771px;top:354.124px;font-size:10.75px;color:#000">44</div>
<div class="c" style="left:798px;top:354.124px;font-size:10.75px;color:#000">44</div>
<div class="c" style="left:825px;top:354.124px;font-size:10.75px;color:#000">44</div>
<div class="c" style="left:852px;top:354.124px;font-size:10.75px;color:#000">42</div>
<div class="c" style="left:879px;top:354.124px;font-size:10.75px;color:#000">44</div>
<div class="c" style="left:906px;top:354.124px;font-size:10.75px;color:#000">44</div>
<div class="c" style="left:149px;top:376.31px;font-size:14px;color:#f4600f;font-weight:bold;letter-spacing:-0.5px">0</div>
<div class="c" style="left:176px;top:376.31px;font-size:14px;color:#f4600f;font-weight:bold;letter-spacing:-0.5px">0</div>
<div class="c" style="left:203px;top:376.31px;font-size:14px;color:#f4600f;font-weight:bold;letter-spacing:-0.5px">0</div>
<div class="c" style="left:230px;top:376.31px;font-size:14px;color:#f4600f;font-weight:bold;letter-spacing:-0.5px">0</div>
<div class="c" style="left:257px;top:376.31px;font-size:14px;color:#f4600f;font-weight:bold;letter-spacing:-0.5px">+1</div>
<div class="c" style="left:284px;top:376.31px;font-size:14px;color:#f4600f;font-weight:bold;letter-spacing:-0.5px">+1</div>
<div class="c" style="left:311px;top:376.31px;font-size:14px;color:#f4600f;font-weight:bold;letter-spacing:-0.5px">+1</div>
<div class="c" style="left:338px;top:376.31px;font-size:14px;color:#f4600f;font-weight:bold;letter-spacing:-0.5px">0</div>
<div class="c" style="left:365px;top:376.31px;font-size:14px;color:#f4600f;font-weight:bold;letter-spacing:-0.5px">0</div>
<div class="c" style="left:392px;top:376.31px;font-size:14px;color:#f4600f;font-weight:bold;letter-spacing:-0.5px">0</div>
<div class="c" style="left:419px;top:376.31px;font-size:14px;color:#f4600f;font-weight:bold;letter-spacing:-0.5px">+1</div>
<div class="c" style="left:446px;top:376.31px;font-size:14px;color:#f4600f;font-weight:bold;letter-spacing:-0.5px">+1</div>
<div class="c" style="left:473px;top:376.31px;font-size:14px;color:#f4600f;font-weight:bold;letter-spacing:-0.5px">+1</div>
<div class="c" style="left:500px;top:376.31px;font-size:14px;color:#f4600f;font-weight:bold;letter-spacing:-0.5px">0</div>
<div class="c" style="left:527px;top:376.31px;font-size:14px;color:#f4600f;font-weight:bold;letter-spacing:-0.5px">0</div>
<div class="c" style="left:554px;top:376.31px;font-size:14px;color:#f4600f;font-weight:bold;letter-spacing:-0.5px">0</div>
<div class="c" style="left:581px;top:376.31px;font-size:14px;color:#f4600f;font-weight:bold;letter-spacing:-0.5px">+1</div>
<div class="c" style="left:608px;top:376.31px;font-size:14px;color:#f4600f;font-weight:bold;letter-spacing:-0.5px">+1</div>
<div class="c" style="left:635px;top:376.31px;font-size:14px;color:#f4600f;font-weight:bold;letter-spacing:-0.5px">+1</div>
<div class="c" style="left:662px;top:376.31px;font-size:14px;color:#f4600f;font-weight:bold;letter-spacing:-0.5px">0</div>
<div class="c" style="left:689px;top:376.31px;font-size:14px;color:#f4600f;font-weight:bold;letter-spacing:-0.5px">0</div>
<div class="c" style="left:716px;top:376.31px;font-size:14px;color:#f4600f;font-weight:bold;letter-spacing:-0.5px">0</div>
<div class="c" style="left:743px;top:376.31px;font-size:14px;color:#f4600f;font-weight:bold;letter-spacing:-0.5px">0</div>
<div class="c" style="left:771px;top:376.31px;font-size:14px;color:#f4600f;font-weight:bold;letter-spacing:-0.5px">0</div>
<div class="c" style="left:798px;top:376.31px;font-size:14px;color:#f4600f;font-weight:bold;letter-spacing:-0.5px">0</div>
<div class="c" style="left:825px;top:376.31px;font-size:14px;color:#f4600f;font-weight:bold;letter-spacing:-0.5px">0</div>
<div class="c" style="left:852px;top:376.31px;font-size:14px;color:#f4600f;font-weight:bold;letter-spacing:-0.5px">+1</div>
<div class="c" style="left:879px;top:376.31px;font-size:14px;color:#f4600f;font-weight:bold;letter-spacing:-0.5px">+1</div>
<div class="c" style="left:906px;top:376.31px;font-size:14px;color:#f4600f;font-weight:bold;letter-spacing:-0.5px">+2</div>
<div class="c" style="left:149px;top:401.728px;font-size:13.5px;color:#2a5aa0">-2</div>
<div class="c" style="left:176px;top:401.728px;font-size:13.5px;color:#2a5aa0">-2</div>
<div class="c" style="left:203px;top:401.728px;font-size:13.5px;color:#2a5aa0">-2</div>
<div class="c" style="left:230px;top:401.728px;font-size:13.5px;color:#2a5aa0">-2</div>
<div class="c" style="left:257px;top:401.728px;font-size:13.5px;color:#2a5aa0">-1</div>
<div class="c" style="left:284px;top:401.728px;font-size:13.5px;color:#2a5aa0">-1</div>
<div class="c" style="left:311px;top:401.728px;font-size:13.5px;color:#2a5aa0">-1</div>
<div class="c" style="left:338px;top:401.728px;font-size:13.5px;color:#2a5aa0">-2</div>
<div class="c" style="left:365px;top:401.728px;font-size:13.5px;color:#2a5aa0">-2</div>
<div class="c" style="left:392px;top:401.728px;font-size:13.5px;color:#2a5aa0">-2</div>
<div class="c" style="left:419px;top:401.728px;font-size:13.5px;color:#2a5aa0">-1</div>
<div class="c" style="left:446px;top:401.728px;font-size:13.5px;color:#2a5aa0">-1</div>
<div class="c" style="left:473px;top:401.728px;font-size:13.5px;color:#2a5aa0">-1</div>
<div class="c" style="left:500px;top:401.728px;font-size:13.5px;color:#2a5aa0">-2</div>
<div class="c" style="left:527px;top:401.728px;font-size:13.5px;color:#2a5aa0">-2</div>
<div class="c" style="left:554px;top:401.728px;font-size:13.5px;color:#2a5aa0">-2</div>
<div class="c" style="left:581px;top:401.728px;font-size:13.5px;color:#2a5aa0">-1</div>
<div class="c" style="left:608px;top:401.728px;font-size:13.5px;color:#2a5aa0">-1</div>
<div class="c" style="left:635px;top:401.728px;font-size:13.5px;color:#2a5aa0">-1</div>
<div class="c" style="left:662px;top:401.728px;font-size:13.5px;color:#2a5aa0">-2</div>
<div class="c" style="left:689px;top:401.728px;font-size:13.5px;color:#2a5aa0">-2</div>
<div class="c" style="left:716px;top:401.728px;font-size:13.5px;color:#2a5aa0">-2</div>
<div class="c" style="left:743px;top:401.728px;font-size:13.5px;color:#2a5aa0">-1</div>
<div class="c" style="left:771px;top:401.728px;font-size:13.5px;color:#2a5aa0">-1</div>
<div class="c" style="left:798px;top:401.728px;font-size:13.5px;color:#2a5aa0">-1</div>
<div class="c" style="left:825px;top:401.728px;font-size:13.5px;color:#2a5aa0">-1</div>
<div class="c" style="left:852px;top:401.728px;font-size:13.5px;color:#f26a1b">0</div>
<div class="c" style="left:879px;top:401.728px;font-size:13.5px;color:#f26a1b">0</div>
<div class="c" style="left:906px;top:401.728px;font-size:13.5px;color:#f26a1b">+1</div>
<div class="c" style="left:149px;top:427.898px;font-size:10.9px;color:#f3561a">767</div>
<div class="c" style="left:176px;top:427.898px;font-size:10.9px;color:#f3561a">767</div>
<div class="c" style="left:203px;top:427.898px;font-size:10.9px;color:#f3561a">767</div>
<div class="c" style="left:230px;top:427.898px;font-size:10.9px;color:#f3561a">767</div>
<div class="c" style="left:257px;top:427.898px;font-size:10.9px;color:#f3561a">767</div>
<div class="c" style="left:284px;top:427.898px;font-size:10.9px;color:#f3561a">767</div>
<div class="c" style="left:311px;top:427.898px;font-size:10.9px;color:#f3561a">767</div>
<div class="c" style="left:338px;top:427.898px;font-size:10.9px;color:#f3561a">767</div>
<div class="c" style="left:365px;top:427.898px;font-size:10.9px;color:#f3561a">766</div>
<div class="c" style="left:392px;top:427.898px;font-size:10.9px;color:#f3561a">767</div>
<div class="c" style="left:419px;top:427.898px;font-size:10.9px;color:#f3561a">766</div>
<div class="c" style="left:446px;top:427.898px;font-size:10.9px;color:#f3561a">766</div>
<div class="c" style="left:473px;top:427.898px;font-size:10.9px;color:#f3561a">766</div>
<div class="c" style="left:500px;top:427.898px;font-size:10.9px;color:#f3561a">766</div>
<div class="c" style="left:527px;top:427.898px;font-size:10.9px;color:#f3561a">766</div>
<div class="c" style="left:554px;top:427.898px;font-size:10.9px;color:#f3561a">766</div>
<div class="c" style="left:581px;top:427.898px;font-size:10.9px;color:#f3561a">765</div>
<div class="c" style="left:608px;top:427.898px;font-size:10.9px;color:#f3561a">765</div>
<div class="c" style="left:635px;top:427.898px;font-size:10.9px;color:#f3561a">766</div>
<div class="c" style="left:662px;top:427.898px;font-size:10.9px;color:#f3561a">766</div>
<div class="c" style="left:689px;top:427.898px;font-size:10.9px;color:#f3561a">766</div>
<div class="c" style="left:716px;top:427.898px;font-size:10.9px;color:#f3561a">766</div>
<div class="c" style="left:743px;top:427.898px;font-size:10.9px;color:#f3561a">766</div>
<div class="c" style="left:771px;top:427.898px;font-size:10.9px;color:#f3561a">766</div>
<div class="c" style="left:798px;top:427.898px;font-size:10.9px;color:#f3561a">766</div>
<div class="c" style="left:825px;top:427.898px;font-size:10.9px;color:#f3561a">766</div>
<div class="c" style="left:852px;top:427.898px;font-size:10.9px;color:#f3561a">766</div>
<div class="c" style="left:879px;top:427.898px;font-size:10.9px;color:#f3561a">766</div>
<div class="c" style="left:906px;top:427.898px;font-size:10.9px;color:#f3561a">766</div>
<div class="c" style="left:149px;top:450.024px;font-size:10.75px;color:#111">2</div>
<div class="c" style="left:176px;top:450.024px;font-size:10.75px;color:#111">2</div>
<div class="c" style="left:203px;top:450.024px;font-size:10.75px;color:#111">2</div>
<div class="c" style="left:230px;top:450.024px;font-size:10.75px;color:#111">2</div>
<div class="c" style="left:257px;top:450.024px;font-size:10.75px;color:#111">2</div>
<div class="c" style="left:284px;top:450.024px;font-size:10.75px;color:#111">2</div>
<div class="c" style="left:311px;top:450.024px;font-size:10.75px;color:#111">2</div>
<div class="c" style="left:338px;top:450.024px;font-size:10.75px;color:#111">2</div>
<div class="c" style="left:365px;top:450.024px;font-size:10.75px;color:#111">2</div>
<div class="c" style="left:392px;top:450.024px;font-size:10.75px;color:#111">2</div>
<div class="c" style="left:419px;top:450.024px;font-size:10.75px;color:#111">2</div>
<div class="c" style="left:446px;top:450.024px;font-size:10.75px;color:#111">2</div>
<div class="c" style="left:473px;top:450.024px;font-size:10.75px;color:#111">2</div>
<div class="c" style="left:500px;top:450.024px;font-size:10.75px;color:#111">2</div>
<div class="c" style="left:527px;top:450.024px;font-size:10.75px;color:#111">2</div>
<div class="c" style="left:554px;top:450.024px;font-size:10.75px;color:#111">2</div>
<div class="c" style="left:581px;top:450.024px;font-size:10.75px;color:#111">2</div>
<div class="c" style="left:608px;top:450.024px;font-size:10.75px;color:#111">2</div>
<div class="c" style="left:635px;top:450.024px;font-size:10.75px;color:#111">2</div>
<div class="c" style="left:662px;top:450.024px;font-size:10.75px;color:#111">2</div>
<div class="c" style="left:689px;top:450.024px;font-size:10.75px;color:#111">2</div>
<div class="c" style="left:716px;top:450.024px;font-size:10.75px;color:#111">2</div>
<div class="c" style="left:743px;top:450.024px;font-size:10.75px;color:#111">1</div>
<div class="c" style="left:771px;top:450.024px;font-size:10.75px;color:#111">1</div>
<div class="c" style="left:798px;top:450.024px;font-size:10.75px;color:#111">1</div>
<div class="c" style="left:825px;top:450.024px;font-size:10.75px;color:#111">1</div>
<div class="c" style="left:852px;top:450.024px;font-size:10.75px;color:#111">1</div>
<div class="c" style="left:879px;top:450.024px;font-size:10.75px;color:#111">1</div>
<div class="c" style="left:906px;top:450.024px;font-size:10.75px;color:#111">1</div>
<div class="c" style="left:149px;top:468.724px;font-size:10.75px;color:#111">5</div>
<div class="c" style="left:176px;top:468.724px;font-size:10.75px;color:#111">5</div>
<div class="c" style="left:203px;top:468.724px;font-size:10.75px;color:#111">5</div>
<div class="c" style="left:311px;top:468.724px;font-size:10.75px;color:#111">5</div>
<div class="c" style="left:149px;top:489.424px;font-size:10.75px;color:#666">Ю-З</div>
<div class="c" style="left:176px;top:489.424px;font-size:10.75px;color:#666">Ю</div>
<div class="c" style="left:203px;top:489.424px;font-size:10.75px;color:#666">Ю</div>
<div class="c" style="left:230px;top:489.424px;font-size:10.75px;color:#666">Ю</div>
<div class="c" style="left:257px;top:489.424px;font-size:10.75px;color:#666">Ю</div>
<div class="c" style="left:284px;top:489.424px;font-size:10.75px;color:#666">Ю</div>
<div class="c" style="left:311px;top:489.424px;font-size:10.75px;color:#666">Ю</div>
<div class="c" style="left:338px;top:489.424px;font-size:10.75px;color:#666">Ю</div>
<div class="c" style="left:365px;top:489.424px;font-size:10.75px;color:#666">Ю</div>
<div class="c" style="left:392px;top:489.424px;font-size:10.75px;color:#666">Ю</div>
<div class="c" style="left:419px;top:489.424px;font-size:10.75px;color:#666">Ю</div>
<div class="c" style="left:446px;top:489.424px;font-size:10.75px;color:#666">Ю</div>
<div class="c" style="left:473px;top:489.424px;font-size:10.75px;color:#666">Ю-В</div>
<div class="c" style="left:500px;top:489.424px;font-size:10.75px;color:#666">Ю-В</div>
<div class="c" style="left:527px;top:489.424px;font-size:10.75px;color:#666">Ю</div>
<div class="c" style="left:554px;top:489.424px;font-size:10.75px;color:#666">Ю</div>
<div class="c" style="left:581px;top:489.424px;font-size:10.75px;color:#666">Ю</div>
<div class="c" style="left:608px;top:489.424px;font-size:10.75px;color:#666">Ю</div>
<div class="c" style="left:635px;top:489.424px;font-size:10.75px;color:#666">Ю</div>
<div class="c" style="left:662px;top:489.424px;font-size:10.75px;color:#666">Ю</div>
<div class="c" style="left:689px;top:489.424px;font-size:10.75px;color:#666">Ю</div>
<div class="c" style="left:716px;top:489.424px;font-size:10.75px;color:#666">Ю</div>
<div class="c" style="left:743px;top:489.424px;font-size:10.75px;color:#666">Ю</div>
<div class="c" style="left:771px;top:489.424px;font-size:10.75px;color:#666">Ю</div>
<div class="c" style="left:798px;top:489.424px;font-size:10.75px;color:#666">Ю</div>
<div class="c" style="left:825px;top:489.424px;font-size:10.75px;color:#666">Ю</div>
<div class="c" style="left:852px;top:489.424px;font-size:10.75px;color:#666">Ю</div>
<div class="c" style="left:879px;top:489.424px;font-size:10.75px;color:#666">Ю</div>
<div class="c" style="left:906px;top:489.424px;font-size:10.75px;color:#666">Ю</div>
<div class="c" style="left:149px;top:512.824px;font-size:10.75px;color:#f45a14;font-weight:bold">91</div>
<div class="c" style="left:176px;top:512.824px;font-size:10.75px;color:#f45a14;font-weight:bold">92</div>
<div class="c" style="left:203px;top:512.824px;font-size:10.75px;color:#f45a14;font-weight:bold">92</div>
<div class="c" style="left:230px;top:512.824px;font-size:10.75px;color:#f45a14;font-weight:bold">91</div>
<div class="c" style="left:257px;top:512.824px;font-size:10.75px;color:#f45a14">90</div>
<div class="c" style="left:284px;top:512.824px;font-size:10.75px;color:#f45a14">88</div>
<div class="c" style="left:311px;top:512.824px;font-size:10.75px;color:#f45a14">88</div>
<div class="c" style="left:338px;top:512.824px;font-size:10.75px;color:#f45a14">89</div>
<div class="c" style="left:365px;top:512.824px;font-size:10.75px;color:#f45a14">90</div>
<div class="c" style="left:392px;top:512.824px;font-size:10.75px;color:#f45a14">90</div>
<div class="c" style="left:419px;top:512.824px;font-size:10.75px;color:#f45a14">90</div>
<div class="c" style="left:446px;top:512.824px;font-size:10.75px;color:#f45a14">90</div>
<div class="c" style="left:473px;top:512.824px;font-size:10.75px;color:#f45a14">90</div>
<div class="c" style="left:500px;top:512.824px;font-size:10.75px;color:#f45a14;font-weight:bold">92</div>
<div class="c" style="left:527px;top:512.824px;font-size:10.75px;color:#f45a14;font-weight:bold">92</div>
<div class="c" style="left:554px;top:512.824px;font-size:10.75px;color:#f45a14;font-weight:bold">92</div>
<div class="c" style="left:581px;top:512.824px;font-size:10.75px;color:#f45a14;font-weight:bold">93</div>
<div class="c" style="left:608px;top:512.824px;font-size:10.75px;color:#f45a14;font-weight:bold">92</div>
<div class="c" style="left:635px;top:512.824px;font-size:10.75px;color:#f45a14;font-weight:bold">92</div>
<div class="c" style="left:662px;top:512.824px;font-size:10.75px;color:#f45a14;font-weight:bold">93</div>
<div class="c" style="left:689px;top:512.824px;font-size:10.75px;color:#f45a14;font-weight:bold">94</div>
<div class="c" style="left:716px;top:512.824px;font-size:10.75px;color:#f45a14;font-weight:bold">96</div>
<div class="c" style="left:743px;top:512.824px;font-size:10.75px;color:#f45a14;font-weight:bold">96</div>
<div class="c" style="left:771px;top:512.824px;font-size:10.75px;color:#f45a14;font-weight:bold">95</div>
<div class="c" style="left:798px;top:512.824px;font-size:10.75px;color:#f45a14;font-weight:bold">96</div>
<div class="c" style="left:825px;top:512.824px;font-size:10.75px;color:#f45a14;font-weight:bold">97</div>
<div class="c" style="left:852px;top:512.824px;font-size:10.75px;color:#f45a14;font-weight:bold">98</div>
<div class="c" style="left:879px;top:512.824px;font-size:10.75px;color:#f45a14;font-weight:bold">97</div>
<div class="c" style="left:906px;top:512.824px;font-size:10.75px;color:#f45a14;font-weight:bold">96</div>
<div class="t" style="left:406px;top:536.5px;font-size:10.75px;color:#111">09:39</div>
<div class="t" style="left:460.3px;top:536.5px;font-size:10.75px;color:#888">15:58</div>
<div class="t" style="left:406px;top:560.5px;font-size:10.75px;color:#111">14:24</div>
<div class="t" style="left:460.3px;top:560.5px;font-size:10.75px;color:#888">09:45</div>
<svg class="abs" style="left:449px;top:579px" width="22" height="22" viewBox="0 0 22 22"><defs><radialGradient id="mg" cx=".5" cy=".6" r=".62"><stop offset="0" stop-color="#2a90d2"/><stop offset=".45" stop-color="#1f6db8"/><stop offset=".85" stop-color="#1a4d97"/><stop offset="1" stop-color="#163f82"/></radialGradient></defs><circle cx="11" cy="11" r="10" fill="url(#mg)"/></svg>
<div class="abs" style="left:30px;top:604px;width:906px;height:15px;background:linear-gradient(to bottom,#fff,#f4f4f4)"></div>
<svg class="abs" style="left:35px;top:607px" width="6" height="10" viewBox="0 0 6 10"><path d="M5 0.5L0.5 4.7L5 9z" fill="#7d7d7d"/></svg>
<div class="abs" style="left:47.5px;top:607.1px;width:331px;height:8.8px;border-radius:4.5px;background:#888"></div>
<svg class="abs" style="left:924px;top:607px" width="6" height="10" viewBox="0 0 6 10"><path d="M0.7 0.5L5.3 4.7L0.7 9z" fill="#7d7d7d"/></svg>
<div class="abs" style="left:30px;top:619px;width:906px;height:18px;background:linear-gradient(to bottom,#e4e4e6 0,#f4f4f5 45%,#fbfbfb 100%)"></div>
<div class="abs" style="left:150px;top:628px;width:762px;height:1px;background:linear-gradient(to right,#eee,#d9d9d9 20%,#d9d9d9 90%,#eee)"></div>
<div class="t" style="left:39px;top:621.6px;font-size:11.6px;font-weight:bold;color:#9a9a9a">Свернуть таблицу</div>
<svg class="abs" style="left:918px;top:625px" width="9" height="6" viewBox="0 0 9 6"><path d="M0.5 5.5L4.5 0.8L8.5 5.5z" fill="#b5b5b5"/></svg>
<div class="abs" style="left:30px;top:650px;width:906px;height:69px;border-radius:4px;background:#fff"></div>
<div class="abs" style="left:30px;top:700px;width:906px;height:19px;background:linear-gradient(to bottom,#e4e4e6 0,#f4f4f5 45%,#fbfbfb 100%)"></div>
<div class="abs" style="left:133px;top:709.5px;width:779px;height:1px;background:linear-gradient(to right,#eee,#d9d9d9 20%,#d9d9d9 90%,#eee)"></div>
<div class="abs" style="left:30px;top:650px;width:105px;height:17.5px;border-radius:4px 0 5px 0;background:linear-gradient(to bottom,#1c72be 0,#1b55a4 40%,#1a4493 70%,#193a86 100%)"></div>
<div class="t" style="left:39px;top:652.6px;font-size:11.6px;color:#fff">Новости погоды</div>
<div class="t" style="left:144px;top:656.6px;font-size:11.68px;color:#111">16 минут назад минимальная температура воздуха наблюдалась <b>в Санкт-Петербурге</b> в Пулково (аэропорт): 0 <span style="position:relative;top:-3px;font-size:10px">o</span>C .</div>
<div class="t" style="left:37.5px;top:675.9px;font-size:11.68px;color:#111">За последние 12 часов максимальная температура воздуха наблюдалась <b>в Санкт-Петербурге</b>: +2 <span style="position:relative;top:-3px;font-size:10px">o</span>C .</div>
<div class="t" style="left:39px;top:704.3px;font-size:11.6px;font-weight:bold;color:#9a9a9a">Свернуть текст</div>
<svg class="abs" style="left:750px;top:672px" width="208" height="64" viewBox="0 0 208 64">
<defs><filter id="ws" x="-10%" y="-20%" width="125%" height="150%"><feGaussianBlur stdDeviation="1.8"/></filter></defs>
<g transform="translate(2.6,2.8)" filter="url(#ws)" opacity=".6"><g fill="none" stroke="#444" stroke-width="2.4" stroke-linejoin="round" stroke-linecap="round"><path d="M19.8 44V18.5M19.3 16.2A5.2 5.7 0 1 1 26.7 16.2M19.3 16.2L17.6 19.6A6.2 7.8 0 1 0 17.6 31.6L19.8 34M26.7 16.2L23.5 18.7A4.7 8.3 0 1 1 23.5 31.5L19.8 34.5"/><path d="M11.4 43.5H26.5V51L19 57.5L11.4 51Z"/></g><text x="38.6" y="43.6" font-family="Liberation Sans, Arial, sans-serif" font-size="29.5" letter-spacing="-0.2" fill="#444">асиенда.ру</text></g>
<g fill="none" stroke="#fff" stroke-width="2" stroke-linejoin="round" stroke-linecap="round"><path d="M19.8 44V18.5M19.3 16.2A5.2 5.7 0 1 1 26.7 16.2M19.3 16.2L17.6 19.6A6.2 7.8 0 1 0 17.6 31.6L19.8 34M26.7 16.2L23.5 18.7A4.7 8.3 0 1 1 23.5 31.5L19.8 34.5"/><path d="M11.4 43.5H26.5V51L19 57.5L11.4 51Z"/></g>
<text x="38.6" y="43.6" font-family="Liberation Sans, Arial, sans-serif" font-size="29.5" letter-spacing="-0.2" fill="#fff">асиенда.ру</text>
</svg>
</body></html>
